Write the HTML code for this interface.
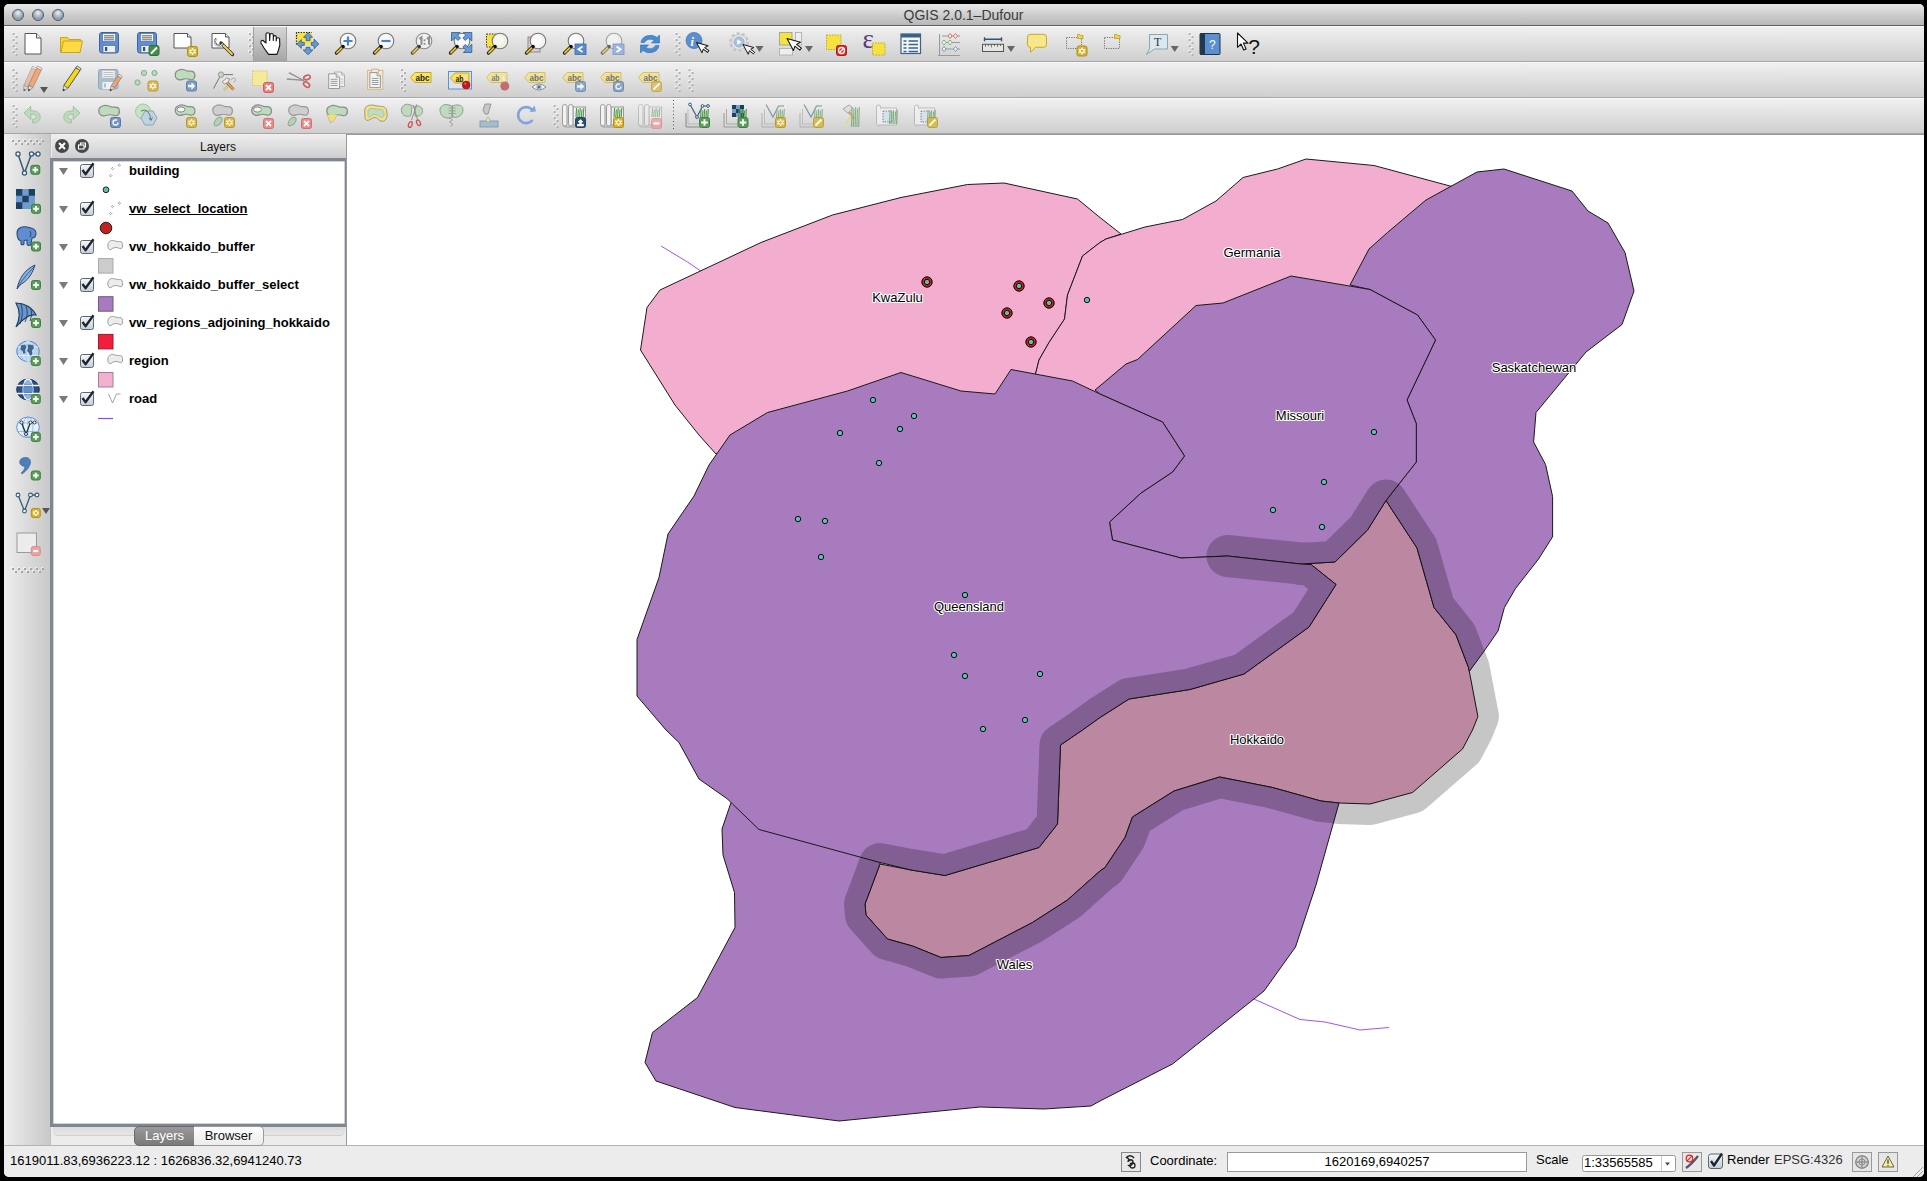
<!DOCTYPE html><html><head><meta charset="utf-8"><title>QGIS</title><style>
html,body{margin:0;padding:0;width:1927px;height:1181px;overflow:hidden;background:#000;font-family:"Liberation Sans",sans-serif}
.a{position:absolute}
.win{left:4px;top:4px;width:1920px;height:1173px;background:#ececec;border-radius:5px;overflow:hidden}
.title{left:4px;top:4px;width:1920px;height:21px;background:linear-gradient(#e9e9e9,#c9c9c9 60%,#b8b8b8);border-bottom:1px solid #5e5e5e;border-radius:5px 5px 0 0}
.ttxt{left:0;top:7px;width:1927px;text-align:center;font-size:14px;color:#3a3a3a;line-height:16px}
.tb{left:4px;width:1920px;height:36px;background:linear-gradient(#f0f0f0 0,#e6e6e6 30%,#cfcfcf 100%);border-top:1px solid #fafafa;border-bottom:1px solid #a5a5a5;box-sizing:border-box}
.ltb{left:4px;top:134px;width:48px;height:1011px;background:linear-gradient(90deg,#f2f2f2 0,#ededed 4%,#d6d6d6 60%,#c9c9c9 96%,#a9a9a9 100%)}
.dock{left:51px;top:134px;width:297px;height:1011px;background:#ececec}
.dtitle{left:52px;top:134px;width:294px;height:25px;background:linear-gradient(#efefef,#cdcdcd)}
.dtitle span{position:absolute;left:38px;width:256px;top:6px;text-align:center;font-size:12px;color:#111}
.tree{left:50px;top:158px;width:292px;height:963px;background:#fff;border:3px solid #7f8892;box-shadow:inset 0 0 0 0.5px #a0a8b0}
.canvas{left:346px;top:134px;width:1578px;height:1011px;background:#fff;border-top:1px solid #9a9a9a;border-left:1px solid #9a9a9a;box-sizing:border-box}
.sb{left:4px;top:1145px;width:1920px;height:32px;background:#ececec;border-top:1px solid #b4b4b4;box-sizing:border-box;border-radius:0 0 5px 5px}
.lbl{font-family:"Liberation Sans",sans-serif;font-size:13px;fill:#000}
.halo{stroke:#fff;stroke-width:2.2px;stroke-linejoin:round;fill:#fff}
.lt{font-size:13px;font-weight:bold;color:#000;left:129px;line-height:16px}
.st{font-size:13px;color:#000;line-height:16px}

.lname{position:absolute;left:129px;font-size:13px;font-weight:bold;color:#000;line-height:15px;white-space:nowrap}
.tabs{left:134px;top:1125px;height:20px}
.tab{position:absolute;top:0;height:20px;font-size:13px;line-height:17px;text-align:center;box-sizing:border-box}
.wbtn{position:absolute;top:9px;width:12px;height:12px;border-radius:50%;box-sizing:border-box;border:1px solid #4d5a66;background:radial-gradient(circle at 50% 30%,#f0f4f8 0,#b6c2cc 35%,#8a9aa8 70%,#c8d4dc 100%)}
</style></head><body>
<div class="a win"></div>
<div class="a title"></div><div class="a ttxt">QGIS 2.0.1–Dufour</div>
<div class="a tb" style="top:26px"></div>
<div class="a tb" style="top:62px"></div>
<div class="a tb" style="top:98px"></div>
<div class="a ltb"></div>
<div class="a dock"></div><div class="a dtitle"><span>Layers</span></div>
<div class="a tree"></div>
<div class="a canvas"></div>
<div class="a sb"></div>
<svg class="map" width="1927" height="1181" viewBox="0 0 1927 1181" style="position:absolute;left:0;top:0">
<defs><clipPath id="mc"><rect x="348" y="135" width="1576" height="1010"/></clipPath></defs>
<g clip-path="url(#mc)">
<polyline points="661,246 687.5,262 700,270.5 720,290" fill="none" stroke="#a352f0" stroke-width="1"/>
<polyline points="1240,990 1255,999.5 1300,1019.5 1325,1022 1360,1030 1389,1027.5" fill="none" stroke="#a352f0" stroke-width="1"/>
<polygon points="660,290 761,242.5 832.5,215 901,197.5 967.5,184.5 1004,183 1077.5,199 1100,217.5 1121,234 1106,239 1100,242.5 1082.5,256 1067.5,295 1064.5,319 1049,342.5 1039,360 1035.5,374 1035,400 800,420 716,454 699,435 675,405 640.5,350 647,307.5" fill="#f3aecf" stroke="#1a1a1a" stroke-width="1" stroke-linejoin="round"/>
<polygon points="1100,242.5 1106,239 1145,227 1182.5,219.5 1216,201 1243,177.5 1277.5,169 1306,159 1374,165.5 1450,186 1470,190 1365,300 1290,300 1200,320 1110,395 1060,395 1035.5,374 1039,360 1049,342.5 1064.5,319 1067.5,295 1082.5,256" fill="#f3aecf" stroke="#1a1a1a" stroke-width="1" stroke-linejoin="round"/>
<polygon points="1386,500.5 1417,548 1434,607.5 1456,635 1468.5,667.5 1469.3,671.4 1477.9,716.5 1472.5,730 1462.5,749 1412.5,792.5 1370,804 1339,803 1321,801 1272.5,787.5 1219.5,777 1174,791 1132.5,817 1125,837.5 1105,867.5 1100,871 1067.5,900 1032.5,922.5 969,955.5 941,957.5 912.5,946 887.5,939 866,915 865,904 880,864 911,870 945,875.5 1039,847.5 1057.5,824 1060.5,745 1082.5,730 1100,717.5 1129,699 1190,689.5 1244,674 1309,627 1336,584.5 1311,564.5 1301,564 1335,562 1367.5,530" fill="#f3aecf" stroke="#1a1a1a" stroke-width="1" stroke-linejoin="round"/>
<polygon points="1350,285 1369,249 1387.5,232.5 1426,200 1477,172 1504,169 1572,191 1588,211 1608,223 1625,252.5 1634,291 1622,324.5 1586,352 1536,412.5 1533.6,442 1545.6,464.6 1552.6,496.6 1552.6,536.8 1538.6,558.9 1515.3,588.8 1504.4,607.5 1498.1,630.9 1484.1,651.1 1469.3,671.4 1468.5,667.5 1456,634.8 1434,607.5 1417,548 1386,500.5 1416.3,462 1416.3,423.7 1407,400 1435.5,340 1417.5,315 1370,289.5" fill="#a77bbd" stroke="#1a1a1a" stroke-width="1" stroke-linejoin="round"/>
<polygon points="1196,305.5 1223,303 1291,276 1370,289.5 1417.5,315 1435.5,340 1407,400 1416.3,423.7 1416.3,462 1386,500.5 1367.5,530 1335,562 1301,564 1227.5,556 1181,558 1112.5,540 1109.5,522 1141,493 1172.5,472 1184.5,456 1171,435 1162.5,422 1100,394 1095,390 1126,364 1137.5,359.5" fill="#a77bbd" stroke="#1a1a1a" stroke-width="1" stroke-linejoin="round"/>
<polygon points="731,802.5 722,829 723,855 734.5,892.5 735,927.5 697.5,997.5 652.5,1032.5 645,1062.5 656,1081 735,1107.5 839,1121 980,1107 1044,1109 1091,1106 1100,1101 1172.5,1064 1264,991 1295.5,947 1316,885 1339,803 1321,801 1272.5,787.5 1219.5,777 1174,791 1132.5,817 1125,837.5 1105,867.5 1100,871 1067.5,900 1032.5,922.5 969,955.5 941,957.5 912.5,946 887.5,939 866,915 865,904 880,864 880,850 759,815 735,800" fill="#a77bbd" stroke="#1a1a1a" stroke-width="1" stroke-linejoin="round"/>
<polygon points="730,435 767.5,412.5 847.5,391 901,372.5 961,391 995,394 1011,369.5 1072.5,381 1100,394 1162.5,422 1171,435 1184.5,456 1172.5,472 1141,493 1109.5,522 1112.5,540 1181,558 1227.5,556 1301,564 1311,564.5 1336,584.5 1309,627 1244,674 1190,689.5 1129,699 1100,717.5 1082.5,730 1060.5,745 1057.5,824 1039,847.5 945,875.5 911,870 880,862.5 759,829.5 732.5,804 727.5,799 699,779 679,742.5 666,730 637,696 637,639.5 659,577.5 668,534 694,496 709,465" fill="#a77bbd" stroke="#1a1a1a" stroke-width="1" stroke-linejoin="round"/>
<g opacity="0.22">
<polygon points="1386,500.5 1417,548 1434,607.5 1456,635 1468.5,667.5 1469.3,671.4 1477.9,716.5 1472.5,730 1462.5,749 1412.5,792.5 1370,804 1339,803 1321,801 1272.5,787.5 1219.5,777 1174,791 1132.5,817 1125,837.5 1105,867.5 1100,871 1067.5,900 1032.5,922.5 969,955.5 941,957.5 912.5,946 887.5,939 866,915 865,904 880,864 911,870 945,875.5 1039,847.5 1057.5,824 1060.5,745 1082.5,730 1100,717.5 1129,699 1190,689.5 1244,674 1309,627 1336,584.5 1311,564.5 1301,564 1335,562 1367.5,530" fill="#000" stroke="#000" stroke-width="42" stroke-linejoin="round"/>
<polyline points="1227.5,556 1311,564.5" fill="none" stroke="#000" stroke-width="42" stroke-linecap="round"/>
</g>
<circle cx="927" cy="282" r="5.2" fill="#c3201f" stroke="#000" stroke-width="1"/>
<circle cx="1019" cy="286" r="5.2" fill="#c3201f" stroke="#000" stroke-width="1"/>
<circle cx="1049" cy="303" r="5.2" fill="#c3201f" stroke="#000" stroke-width="1"/>
<circle cx="1007" cy="313" r="5.2" fill="#c3201f" stroke="#000" stroke-width="1"/>
<circle cx="1031" cy="342" r="5.2" fill="#c3201f" stroke="#000" stroke-width="1"/>
<circle cx="1087" cy="300" r="2.7" fill="#5ebfae" stroke="#000" stroke-width="0.9"/>
<circle cx="873" cy="400" r="2.7" fill="#5ebfae" stroke="#000" stroke-width="0.9"/>
<circle cx="914" cy="416" r="2.7" fill="#5ebfae" stroke="#000" stroke-width="0.9"/>
<circle cx="900" cy="429" r="2.7" fill="#5ebfae" stroke="#000" stroke-width="0.9"/>
<circle cx="840" cy="433" r="2.7" fill="#5ebfae" stroke="#000" stroke-width="0.9"/>
<circle cx="879" cy="463" r="2.7" fill="#5ebfae" stroke="#000" stroke-width="0.9"/>
<circle cx="798" cy="519" r="2.7" fill="#5ebfae" stroke="#000" stroke-width="0.9"/>
<circle cx="825" cy="521" r="2.7" fill="#5ebfae" stroke="#000" stroke-width="0.9"/>
<circle cx="821" cy="557" r="2.7" fill="#5ebfae" stroke="#000" stroke-width="0.9"/>
<circle cx="965" cy="595" r="2.7" fill="#5ebfae" stroke="#000" stroke-width="0.9"/>
<circle cx="954" cy="655" r="2.7" fill="#5ebfae" stroke="#000" stroke-width="0.9"/>
<circle cx="965" cy="676" r="2.7" fill="#5ebfae" stroke="#000" stroke-width="0.9"/>
<circle cx="1040" cy="674" r="2.7" fill="#5ebfae" stroke="#000" stroke-width="0.9"/>
<circle cx="1025" cy="720" r="2.7" fill="#5ebfae" stroke="#000" stroke-width="0.9"/>
<circle cx="983" cy="729" r="2.7" fill="#5ebfae" stroke="#000" stroke-width="0.9"/>
<circle cx="1374" cy="432" r="2.7" fill="#5ebfae" stroke="#000" stroke-width="0.9"/>
<circle cx="1324" cy="482" r="2.7" fill="#5ebfae" stroke="#000" stroke-width="0.9"/>
<circle cx="1273" cy="510" r="2.7" fill="#5ebfae" stroke="#000" stroke-width="0.9"/>
<circle cx="1322" cy="527" r="2.7" fill="#5ebfae" stroke="#000" stroke-width="0.9"/>
<circle cx="927" cy="282" r="2.7" fill="#5ebfae" stroke="#000" stroke-width="0.9"/>
<circle cx="1019" cy="286" r="2.7" fill="#5ebfae" stroke="#000" stroke-width="0.9"/>
<circle cx="1049" cy="303" r="2.7" fill="#5ebfae" stroke="#000" stroke-width="0.9"/>
<circle cx="1007" cy="313" r="2.7" fill="#5ebfae" stroke="#000" stroke-width="0.9"/>
<circle cx="1031" cy="342" r="2.7" fill="#5ebfae" stroke="#000" stroke-width="0.9"/>
<text x="897.5" y="301.5" text-anchor="middle" class="lbl halo">KwaZulu</text>
<text x="897.5" y="301.5" text-anchor="middle" class="lbl">KwaZulu</text>
<text x="1252" y="256.5" text-anchor="middle" class="lbl halo">Germania</text>
<text x="1252" y="256.5" text-anchor="middle" class="lbl">Germania</text>
<text x="1534" y="371.5" text-anchor="middle" class="lbl halo">Saskatchewan</text>
<text x="1534" y="371.5" text-anchor="middle" class="lbl">Saskatchewan</text>
<text x="1300" y="420.0" text-anchor="middle" class="lbl halo">Missouri</text>
<text x="1300" y="420.0" text-anchor="middle" class="lbl">Missouri</text>
<text x="969" y="610.5" text-anchor="middle" class="lbl halo">Queensland</text>
<text x="969" y="610.5" text-anchor="middle" class="lbl">Queensland</text>
<text x="1257" y="744.0" text-anchor="middle" class="lbl halo">Hokkaido</text>
<text x="1257" y="744.0" text-anchor="middle" class="lbl">Hokkaido</text>
<text x="1014.5" y="968.5" text-anchor="middle" class="lbl halo">Wales</text>
<text x="1014.5" y="968.5" text-anchor="middle" class="lbl">Wales</text>
</g>
</svg>
<svg width="1927" height="1181" viewBox="0 0 1927 1181" style="position:absolute;left:0;top:0;pointer-events:none"><defs><linearGradient id="pressed" x1="0" y1="0" x2="0" y2="1"><stop offset="0" stop-color="#d6d6d6"/><stop offset="1" stop-color="#a6a6a6"/></linearGradient><linearGradient id="cb" x1="0" y1="0" x2="0" y2="1"><stop offset="0" stop-color="#f6f8fa"/><stop offset="1" stop-color="#c4ccd6"/></linearGradient></defs><rect x="11.7" y="32.2" width="2" height="2" fill="#fcfcfc" opacity="0.9"/><rect x="12.5" y="33" width="2" height="2" fill="#b0b0b0"/><rect x="14.7" y="35.2" width="2" height="2" fill="#fcfcfc" opacity="0.9"/><rect x="15.5" y="36" width="2" height="2" fill="#b0b0b0"/><rect x="11.7" y="38.2" width="2" height="2" fill="#fcfcfc" opacity="0.9"/><rect x="12.5" y="39" width="2" height="2" fill="#b0b0b0"/><rect x="14.7" y="41.2" width="2" height="2" fill="#fcfcfc" opacity="0.9"/><rect x="15.5" y="42" width="2" height="2" fill="#b0b0b0"/><rect x="11.7" y="44.2" width="2" height="2" fill="#fcfcfc" opacity="0.9"/><rect x="12.5" y="45" width="2" height="2" fill="#b0b0b0"/><rect x="14.7" y="47.2" width="2" height="2" fill="#fcfcfc" opacity="0.9"/><rect x="15.5" y="48" width="2" height="2" fill="#b0b0b0"/><rect x="11.7" y="50.2" width="2" height="2" fill="#fcfcfc" opacity="0.9"/><rect x="12.5" y="51" width="2" height="2" fill="#b0b0b0"/><rect x="14.7" y="53.2" width="2" height="2" fill="#fcfcfc" opacity="0.9"/><rect x="15.5" y="54" width="2" height="2" fill="#b0b0b0"/><path d="M25.0 33.5H36.5L41.0 38V54.0H25.0Z" fill="#fff" stroke="#555" stroke-width="1"/><path d="M36.5 33.5V38H41.0" fill="#eee" stroke="#555" stroke-width="1"/><path d="M60.5 37.5h7l1.5 2h11.5v12.5h-20z" fill="#f6d33a" stroke="#c9a51c" stroke-width="1"/><path d="M61 52.5l2.5-11.5h19l-2.5 11.5z" fill="#fedb45" stroke="#c9a51c" stroke-width="1"/><rect x="99.5" y="32.5" width="19" height="20.5" rx="2.5" fill="#5e8fd2" stroke="#3d6399" stroke-width="1"/><rect x="102.5" y="33.5" width="13" height="8" fill="#f4f4f4" stroke="#3d6399" stroke-width="0.6"/><path d="M104 35.8h10M104 37.8h10M104 39.8h10" stroke="#555" stroke-width="0.9"/><rect x="103" y="45.5" width="12.5" height="7" fill="#ededed" stroke="#3d6399" stroke-width="0.6"/><rect x="105" y="47" width="2.2" height="4" fill="#2a4f80"/><rect x="137.5" y="32.5" width="19" height="20.5" rx="2.5" fill="#5e8fd2" stroke="#3d6399" stroke-width="1"/><rect x="140.5" y="33.5" width="13" height="8" fill="#f4f4f4" stroke="#3d6399" stroke-width="0.6"/><path d="M142 35.8h10M142 37.8h10M142 39.8h10" stroke="#555" stroke-width="0.9"/><rect x="141" y="45.5" width="12.5" height="7" fill="#ededed" stroke="#3d6399" stroke-width="0.6"/><rect x="143" y="47" width="2.2" height="4" fill="#2a4f80"/><rect x="149.0" y="45.5" width="10" height="10" rx="2" fill="#3f8f48" stroke="#2f6f38" stroke-width="1"/><path d="M151.0 53.5L157.0 47.5" stroke="#fff" stroke-width="2"/><path d="M174.0 33.5H187.5L191.0 37V48.0H174.0Z" fill="#fff" stroke="#555" stroke-width="1"/><path d="M187.5 33.5V37H191.0" fill="#eee" stroke="#555" stroke-width="1"/><rect x="187.5" y="46.5" width="10" height="10" rx="2" fill="#d8b22a" stroke="#b28f12" stroke-width="1"/><path d="M192.5 48V55M189.2 49.8L195.8 53.2M189.2 53.2L195.8 49.8" stroke="#fff" stroke-width="1.3"/><circle cx="192.5" cy="51.5" r="1.8" fill="#d8b22a" stroke="#fff" stroke-width="1"/><path d="M212.0 33.5H225.5L229.0 37V48.0H212.0Z" fill="#fff" stroke="#555" stroke-width="1"/><path d="M225.5 33.5V37H229.0" fill="#eee" stroke="#555" stroke-width="1"/><path d="M221 43L232.5 54.5" stroke="#333" stroke-width="3.4" stroke-linecap="round"/><path d="M223.5 45.5L232 54" stroke="#f2cf50" stroke-width="2" stroke-linecap="round"/><path d="M216.5 38.5a4 4 0 1 0 6 5" fill="none" stroke="#555" stroke-width="2.2"/><path d="M217 38.6a4 4 0 1 0 5.6 4.8" fill="none" stroke="#fff" stroke-width="1"/><rect x="248.2" y="32.2" width="2" height="2" fill="#fcfcfc" opacity="0.9"/><rect x="249" y="33" width="2" height="2" fill="#b0b0b0"/><rect x="251.2" y="35.2" width="2" height="2" fill="#fcfcfc" opacity="0.9"/><rect x="252" y="36" width="2" height="2" fill="#b0b0b0"/><rect x="248.2" y="38.2" width="2" height="2" fill="#fcfcfc" opacity="0.9"/><rect x="249" y="39" width="2" height="2" fill="#b0b0b0"/><rect x="251.2" y="41.2" width="2" height="2" fill="#fcfcfc" opacity="0.9"/><rect x="252" y="42" width="2" height="2" fill="#b0b0b0"/><rect x="248.2" y="44.2" width="2" height="2" fill="#fcfcfc" opacity="0.9"/><rect x="249" y="45" width="2" height="2" fill="#b0b0b0"/><rect x="251.2" y="47.2" width="2" height="2" fill="#fcfcfc" opacity="0.9"/><rect x="252" y="48" width="2" height="2" fill="#b0b0b0"/><rect x="248.2" y="50.2" width="2" height="2" fill="#fcfcfc" opacity="0.9"/><rect x="249" y="51" width="2" height="2" fill="#b0b0b0"/><rect x="251.2" y="53.2" width="2" height="2" fill="#fcfcfc" opacity="0.9"/><rect x="252" y="54" width="2" height="2" fill="#b0b0b0"/><rect x="253.5" y="27" width="33" height="34" fill="url(#pressed)"/><path d="M253.5 27V61M286.5 27V61" stroke="#a0a0a0" stroke-width="1"/><path d="M268.5 54.4L264 48L261 43C260.5 41.5 261.5 40 263 40.5L266 43L266 34C266 32.3 269.5 32.3 269.5 34L269.7 40.5L270 35C270 33 273.3 33 273.3 35L273.3 40.5L273.4 37C273.4 35.2 276.2 35.2 276.2 37L276.2 41L276.4 39C276.4 37.3 279.6 37.3 279.6 39L279.8 45L278.5 50L277 54.4Z" fill="#fff" stroke="#111" stroke-width="1.1" stroke-linejoin="round"/><rect x="296.5" y="32.5" width="15.5" height="12" fill="#f8e43a"/><path d="M296.5 44.5V32.5H312" fill="none" stroke="#111" stroke-width="1.2" stroke-dasharray="1.3 1.4"/><path d="M308 32.7L312.6 37.3L310 37.3L310 40.6L306.1 40.6L306.1 37.3L303.5 37.3Z M296.8 44L301.3 39.5L301.3 42.4L304.3 42.4L304.3 45.4L301.3 45.4L301.3 48.4Z M318.9 44L314 39.1L314 42.4L311.4 42.4L311.4 45.4L314 45.4L314 48.8Z M308 54.8L312.9 49.9L310 49.9L310 47.3L306.1 47.3L306.1 49.9L303.2 49.9Z" fill="#6a9ad6" stroke="#2f5a8e" stroke-width="0.8" stroke-linejoin="round"/><circle cx="348" cy="41" r="7.8" fill="#f4f4f4" stroke="#777" stroke-width="1.1"/><circle cx="347" cy="40" r="5" fill="#fff" opacity="0.5"/><path d="M348 36.5V45.5M343.5 41H352.5" stroke="#4a84c4" stroke-width="2.2"/><path d="M343 46.5L336.5 53" stroke="#222" stroke-width="3.4" stroke-linecap="round"/><path d="M342.2 47.4L337 52.6" stroke="#f2c418" stroke-width="2" stroke-linecap="round"/><circle cx="343" cy="46.6" r="1.6" fill="#111"/><circle cx="386" cy="41" r="7.8" fill="#f4f4f4" stroke="#777" stroke-width="1.1"/><circle cx="385" cy="40" r="5" fill="#fff" opacity="0.5"/><path d="M381.5 41H390.5" stroke="#4a84c4" stroke-width="2.2"/><path d="M381 46.5L374.5 53" stroke="#222" stroke-width="3.4" stroke-linecap="round"/><path d="M380.2 47.4L375 52.6" stroke="#f2c418" stroke-width="2" stroke-linecap="round"/><circle cx="381" cy="46.6" r="1.6" fill="#111"/><g opacity="0.8"><circle cx="424" cy="41" r="7.8" fill="#f4f4f4" stroke="#777" stroke-width="1.1"/><circle cx="423" cy="40" r="5" fill="#fff" opacity="0.5"/><path d="M419.3 39l2.2-1.6v7.4M426.8 39l2.2-1.6v7.4" fill="none" stroke="#7a7a7a" stroke-width="2.1"/><rect x="423.6" y="39.3" width="1.9" height="1.9" fill="#7a7a7a"/><rect x="423.6" y="42.9" width="1.9" height="1.9" fill="#7a7a7a"/><path d="M419 46.5L412.5 53" stroke="#222" stroke-width="3.4" stroke-linecap="round"/><path d="M418.2 47.4L413 52.6" stroke="#f2c418" stroke-width="2" stroke-linecap="round"/><circle cx="419" cy="46.6" r="1.6" fill="#111"/></g><circle cx="462" cy="41" r="7.8" fill="#f4f4f4" stroke="#777" stroke-width="1.1"/><circle cx="461" cy="40" r="5" fill="#fff" opacity="0.5"/><path d="M457 46.5L450.5 53" stroke="#222" stroke-width="3.4" stroke-linecap="round"/><path d="M456.2 47.4L451 52.6" stroke="#f2c418" stroke-width="2" stroke-linecap="round"/><circle cx="457" cy="46.6" r="1.6" fill="#111"/><path d="M451.5 32.5H460L457.5 35L460.5 38L458 40.5L455 37.5L451.5 41Z M471.8 32.5H463.3L465.8 35L462.8 38L465.3 40.5L468.3 37.5L471.8 41Z M471.8 52.5H463.3L465.8 50L462.8 47L465.3 44.5L468.3 47.5L471.8 44Z" fill="#6a9ad6" stroke="#2f5a8e" stroke-width="0.8" stroke-linejoin="round"/><rect x="486.5" y="34" width="9" height="13" fill="#f6e23c" stroke="#222" stroke-width="0.9" stroke-dasharray="1.5 1.2"/><circle cx="500" cy="41" r="7.8" fill="#efefe0" stroke="#777" stroke-width="1.1"/><circle cx="499" cy="40" r="5" fill="#fff" opacity="0.5"/><path d="M495 46.5L488.5 53" stroke="#222" stroke-width="3.4" stroke-linecap="round"/><path d="M494.2 47.4L489 52.6" stroke="#f2c418" stroke-width="2" stroke-linecap="round"/><circle cx="495" cy="46.6" r="1.6" fill="#111"/><rect x="528" y="37" width="12" height="15" fill="#dccbd8" stroke="#777" stroke-width="0.8"/><circle cx="538" cy="41" r="7.8" fill="#f4f4f4" stroke="#777" stroke-width="1.1"/><circle cx="537" cy="40" r="5" fill="#fff" opacity="0.5"/><path d="M533 46.5L526.5 53" stroke="#222" stroke-width="3.4" stroke-linecap="round"/><path d="M532.2 47.4L527 52.6" stroke="#f2c418" stroke-width="2" stroke-linecap="round"/><circle cx="533" cy="46.6" r="1.6" fill="#111"/><circle cx="576" cy="41" r="7.8" fill="#f4f4f4" stroke="#777" stroke-width="1.1"/><circle cx="575" cy="40" r="5" fill="#fff" opacity="0.5"/><path d="M571 46.5L564.5 53" stroke="#222" stroke-width="3.4" stroke-linecap="round"/><path d="M570.2 47.4L565 52.6" stroke="#f2c418" stroke-width="2" stroke-linecap="round"/><circle cx="571" cy="46.6" r="1.6" fill="#111"/><rect x="575" y="44" width="11" height="10.5" fill="#5a8ccc" stroke="#3a6aa8" stroke-width="0.8"/><path d="M582.5 46.5l-4 2.7 4 2.7" stroke="#fff" stroke-width="1.8" fill="none"/><g opacity="0.6"><circle cx="614" cy="41" r="7.8" fill="#f4f4f4" stroke="#777" stroke-width="1.1"/><circle cx="613" cy="40" r="5" fill="#fff" opacity="0.5"/><path d="M609 46.5L602.5 53" stroke="#222" stroke-width="3.4" stroke-linecap="round"/><path d="M608.2 47.4L603 52.6" stroke="#f2c418" stroke-width="2" stroke-linecap="round"/><circle cx="609" cy="46.6" r="1.6" fill="#111"/></g><rect x="613" y="44" width="11" height="10.5" fill="#9ab6da" stroke="#7a96c0" stroke-width="0.8"/><path d="M616.5 46.5l4 2.7-4 2.7" stroke="#fff" stroke-width="1.8" fill="none"/><path d="M641 42.5a9.5 8 0 0 1 16-5l2.5-2.5v8h-8l2.6-2.6a6 5 0 0 0-9.6 2.1z" fill="#4a8ad2" stroke="#2e6cb0" stroke-width="0.6"/><path d="M659 45.5a9.5 8 0 0 1-16 5l-2.5 2.5v-8h8l-2.6 2.6a6 5 0 0 0 9.6-2.1z" fill="#4a8ad2" stroke="#2e6cb0" stroke-width="0.6"/><rect x="674.7" y="32.2" width="2" height="2" fill="#fcfcfc" opacity="0.9"/><rect x="675.5" y="33" width="2" height="2" fill="#b0b0b0"/><rect x="677.7" y="35.2" width="2" height="2" fill="#fcfcfc" opacity="0.9"/><rect x="678.5" y="36" width="2" height="2" fill="#b0b0b0"/><rect x="674.7" y="38.2" width="2" height="2" fill="#fcfcfc" opacity="0.9"/><rect x="675.5" y="39" width="2" height="2" fill="#b0b0b0"/><rect x="677.7" y="41.2" width="2" height="2" fill="#fcfcfc" opacity="0.9"/><rect x="678.5" y="42" width="2" height="2" fill="#b0b0b0"/><rect x="674.7" y="44.2" width="2" height="2" fill="#fcfcfc" opacity="0.9"/><rect x="675.5" y="45" width="2" height="2" fill="#b0b0b0"/><rect x="677.7" y="47.2" width="2" height="2" fill="#fcfcfc" opacity="0.9"/><rect x="678.5" y="48" width="2" height="2" fill="#b0b0b0"/><rect x="674.7" y="50.2" width="2" height="2" fill="#fcfcfc" opacity="0.9"/><rect x="675.5" y="51" width="2" height="2" fill="#b0b0b0"/><rect x="677.7" y="53.2" width="2" height="2" fill="#fcfcfc" opacity="0.9"/><rect x="678.5" y="54" width="2" height="2" fill="#b0b0b0"/><circle cx="694" cy="40.5" r="8" fill="#5b8fd0" stroke="#4677b8" stroke-width="0.8"/><text x="690.5" y="45.5" font-family="Liberation Serif" font-style="italic" font-weight="bold" font-size="12" fill="#fff">i</text><path transform="translate(696.5,42.5) rotate(-28) scale(0.9)" d="M0 0L0 13L3.2 10L5.6 15.5L7.8 14.5L5.4 9.2L9.6 9.2Z" fill="#fff" stroke="#111" stroke-width="1" stroke-linejoin="round"/><circle cx="739" cy="42" r="8.6" fill="#e4e4e4" stroke="#c4c4c4" stroke-width="2.4" stroke-dasharray="3 2.4"/><circle cx="739" cy="42" r="7.4" fill="#ececec" stroke="#c8c8c8" stroke-width="1"/><circle cx="739" cy="42" r="5.2" fill="#a8c0e0" stroke="#8fa8c8" stroke-width="0.6"/><path d="M737.2 39.2v5.6l4.6-2.8z" fill="#fff"/><path transform="translate(743,44.5) rotate(-28) scale(0.85)" d="M0 0L0 13L3.2 10L5.6 15.5L7.8 14.5L5.4 9.2L9.6 9.2Z" fill="#f4f4f4" stroke="#111" stroke-width="1" stroke-linejoin="round"/><path d="M755.5 46 h8 l-4 6 z" fill="#666"/><rect x="779.5" y="32.5" width="12.5" height="12.5" fill="#f6e23c" stroke="#999" stroke-width="0.8"/><rect x="795.5" y="32.5" width="6" height="12.5" fill="#eee" stroke="#aaa" stroke-width="0.8"/><rect x="779.5" y="48.5" width="13" height="6.5" fill="#eee" stroke="#aaa" stroke-width="0.8"/><path transform="translate(787,38.5) rotate(-28) scale(1.05)" d="M0 0L0 13L3.2 10L5.6 15.5L7.8 14.5L5.4 9.2L9.6 9.2Z" fill="#fff" stroke="#111" stroke-width="1" stroke-linejoin="round"/><path d="M805 46 h8 l-4 6 z" fill="#666"/><rect x="826.5" y="35" width="14.5" height="14.5" fill="#f6e23c" stroke="#b8a020" stroke-width="0.9" stroke-dasharray="1.5 1.2"/><rect x="836.5" y="45.5" width="10" height="10" rx="2" fill="#e02828" stroke="#b01818" stroke-width="1"/><circle cx="841.5" cy="50.5" r="3" fill="none" stroke="#fff" stroke-width="1.3"/><path d="M839.5 52.5L843.5 48.5" stroke="#fff" stroke-width="1.3"/><text x="862.5" y="47.8" font-family="Liberation Serif" font-size="27" fill="#5a3a80">ε</text><rect x="872.5" y="43" width="12.5" height="12" fill="#f6e23c" stroke="#b8a020" stroke-width="0.9" stroke-dasharray="1.5 1.2"/><rect x="901" y="34" width="19.5" height="19.5" fill="#f4f8fc" stroke="#3b6288" stroke-width="1.2"/><rect x="901" y="34" width="19.5" height="3.5" fill="#3b6288"/><path d="M903.5 41h3M908.5 41h9.5M903.5 44.5h3M908.5 44.5h9.5M903.5 48h3M908.5 48h9.5M903.5 51.5h3M908.5 51.5h9.5" stroke="#3b6288" stroke-width="1.3"/><path d="M938 55.5h22M939.5 55V34M942 36h18M942 42.5h18M942 49h18" stroke="#999" stroke-width="1"/><path d="M950 33.5l2 2.5-2 2.5-2-2.5z M955.5 33.5l2 2.5-2 2.5-2-2.5z" fill="#fff" stroke="#d66" stroke-width="1"/><path d="M944 40l2 2.5-2 2.5-2-2.5z M950 40l2 2.5-2 2.5-2-2.5z" fill="#fff" stroke="#6b6" stroke-width="1"/><path d="M944 46.5l2 2.5-2 2.5-2-2.5z M955.5 46.5l2 2.5-2 2.5-2-2.5z" fill="#fff" stroke="#69c" stroke-width="1"/><path d="M984.5 39.2h17M984.5 37.2v4M1001.5 37.2v4" stroke="#2f5478" stroke-width="1.4"/><rect x="982.5" y="44.3" width="21" height="7.2" fill="#e6e6e0" stroke="#555" stroke-width="1"/><path d="M985.5 44.3v2.5M988.5 44.3v1.8M991.5 44.3v3M994.5 44.3v1.8M997.5 44.3v2.5M1000.5 44.3v1.8" stroke="#555" stroke-width="0.8"/><path d="M1007 46 h8 l-4 6 z" fill="#666"/><path transform="translate(0,1.8)" d="M1027.5 35.5a3 3 0 0 1 3-3h13a3 3 0 0 1 3 3v7a3 3 0 0 1-3 3h-8l-5 5v-5h0a3 3 0 0 1-3-3z" fill="#f8e78a" stroke="#c9a820" stroke-width="1"/><rect x="1066.5" y="37.5" width="15" height="11" fill="none" stroke="#666" stroke-width="0.9" stroke-dasharray="1.2 1.2"/><path d="M1077.5 37.5v-3h2.5l1 1h2v3h-5.5z" fill="#f6d33a" stroke="#b8951a" stroke-width="0.7"/><rect x="1077.0" y="46.0" width="10" height="10" rx="2" fill="#d8b22a" stroke="#b28f12" stroke-width="1"/><path d="M1082.0 47.5V54.5M1078.7 49.3L1085.3 52.7M1078.7 52.7L1085.3 49.3" stroke="#fff" stroke-width="1.3"/><circle cx="1082.0" cy="51.0" r="1.8" fill="#d8b22a" stroke="#fff" stroke-width="1"/><rect x="1104.5" y="37.5" width="15" height="11" fill="none" stroke="#666" stroke-width="0.9" stroke-dasharray="1.2 1.2"/><path d="M1114.5 37.5v-3h2.5l1 1h2v3h-5.5z" fill="#f6d33a" stroke="#b8951a" stroke-width="0.7"/><path d="M1149.5 34.5h18v14.5h-13l-8 5.5 3-5.5v-14.5z" fill="#dce8f0" stroke="#8aa" stroke-width="1"/><text x="1154" y="46" font-family="Liberation Serif" font-size="12" fill="#333">T</text><path d="M1170.7 46 h8 l-4 6 z" fill="#666"/><rect x="1187.7" y="32.2" width="2" height="2" fill="#fcfcfc" opacity="0.9"/><rect x="1188.5" y="33" width="2" height="2" fill="#b0b0b0"/><rect x="1190.7" y="35.2" width="2" height="2" fill="#fcfcfc" opacity="0.9"/><rect x="1191.5" y="36" width="2" height="2" fill="#b0b0b0"/><rect x="1187.7" y="38.2" width="2" height="2" fill="#fcfcfc" opacity="0.9"/><rect x="1188.5" y="39" width="2" height="2" fill="#b0b0b0"/><rect x="1190.7" y="41.2" width="2" height="2" fill="#fcfcfc" opacity="0.9"/><rect x="1191.5" y="42" width="2" height="2" fill="#b0b0b0"/><rect x="1187.7" y="44.2" width="2" height="2" fill="#fcfcfc" opacity="0.9"/><rect x="1188.5" y="45" width="2" height="2" fill="#b0b0b0"/><rect x="1190.7" y="47.2" width="2" height="2" fill="#fcfcfc" opacity="0.9"/><rect x="1191.5" y="48" width="2" height="2" fill="#b0b0b0"/><rect x="1187.7" y="50.2" width="2" height="2" fill="#fcfcfc" opacity="0.9"/><rect x="1188.5" y="51" width="2" height="2" fill="#b0b0b0"/><rect x="1190.7" y="53.2" width="2" height="2" fill="#fcfcfc" opacity="0.9"/><rect x="1191.5" y="54" width="2" height="2" fill="#b0b0b0"/><rect x="1200" y="33.5" width="20" height="21" rx="1" fill="#5b8fd0" stroke="#1f3346" stroke-width="1"/><rect x="1200" y="33.5" width="5" height="21" fill="#22384c"/><text x="1209" y="48.5" font-family="Liberation Sans" font-size="12" fill="#fff">?</text><path transform="translate(1237.5,33) rotate(0) scale(1.1)" d="M0 0L0 13L3.2 10L5.6 15.5L7.8 14.5L5.4 9.2L9.6 9.2Z" fill="#fff" stroke="#111" stroke-width="1" stroke-linejoin="round"/><text x="1248.3" y="54" font-family="Liberation Sans" font-size="21" fill="#111">?</text><rect x="11.7" y="68.2" width="2" height="2" fill="#fcfcfc" opacity="0.9"/><rect x="12.5" y="69" width="2" height="2" fill="#b0b0b0"/><rect x="14.7" y="71.2" width="2" height="2" fill="#fcfcfc" opacity="0.9"/><rect x="15.5" y="72" width="2" height="2" fill="#b0b0b0"/><rect x="11.7" y="74.2" width="2" height="2" fill="#fcfcfc" opacity="0.9"/><rect x="12.5" y="75" width="2" height="2" fill="#b0b0b0"/><rect x="14.7" y="77.2" width="2" height="2" fill="#fcfcfc" opacity="0.9"/><rect x="15.5" y="78" width="2" height="2" fill="#b0b0b0"/><rect x="11.7" y="80.2" width="2" height="2" fill="#fcfcfc" opacity="0.9"/><rect x="12.5" y="81" width="2" height="2" fill="#b0b0b0"/><rect x="14.7" y="83.2" width="2" height="2" fill="#fcfcfc" opacity="0.9"/><rect x="15.5" y="84" width="2" height="2" fill="#b0b0b0"/><rect x="11.7" y="86.2" width="2" height="2" fill="#fcfcfc" opacity="0.9"/><rect x="12.5" y="87" width="2" height="2" fill="#b0b0b0"/><rect x="14.7" y="89.2" width="2" height="2" fill="#fcfcfc" opacity="0.9"/><rect x="15.5" y="90" width="2" height="2" fill="#b0b0b0"/><g opacity="0.7"><path d="M28.3 87.5 L36.3 70.0 L31.7 68.0 L23.8 85.4Z" fill="#e8b090" stroke="#999" stroke-width="0.9"/><path d="M24.0 91.0 L28.3 87.5 L23.8 85.4Z" fill="#e4e4e4" stroke="#777" stroke-width="0.8"/><circle cx="24.5" cy="89.9" r="1" fill="#333"/><path d="M36.3 70.0 L37.1 68.2 L32.6 66.1 L31.7 68.0Z" fill="#f4f4f4" stroke="#999" stroke-width="0.8"/></g><g opacity="0.9"><path d="M32.9 87.6 L41.3 70.1 L36.7 67.9 L28.4 85.4Z" fill="#f0a070" stroke="#b08a70" stroke-width="0.9"/><path d="M28.5 91.0 L32.9 87.6 L28.4 85.4Z" fill="#e4e4e4" stroke="#777" stroke-width="0.8"/><circle cx="29.0" cy="89.9" r="1" fill="#333"/><path d="M41.3 70.1 L42.1 68.3 L37.6 66.1 L36.7 67.9Z" fill="#f4f4f4" stroke="#b08a70" stroke-width="0.8"/></g><path d="M40 87 h8 l-4 6 z" fill="#555"/><path d="M67.9 88.3 L80.1 70.4 L75.9 67.6 L63.8 85.5Z" fill="#f2d818" stroke="#444" stroke-width="0.9"/><path d="M63.0 91.0 L67.9 88.3 L63.8 85.5Z" fill="#e4e4e4" stroke="#777" stroke-width="0.8"/><circle cx="63.7" cy="90.0" r="1" fill="#333"/><path d="M80.1 70.4 L81.2 68.8 L77.1 65.9 L75.9 67.6Z" fill="#f4f4f4" stroke="#444" stroke-width="0.8"/><rect x="98.5" y="69.5" width="19.5" height="19.5" rx="2" fill="#a9bfd0" stroke="#90a6b8"/><rect x="102" y="70.5" width="13" height="7.5" fill="#f2f2f2" stroke="#b0b8c0" stroke-width="0.5"/><path d="M103.5 72.5h10M103.5 74.5h10M103.5 76.5h10" stroke="#aaa" stroke-width="0.7"/><rect x="102.5" y="82" width="12" height="7" fill="#f0f0f0"/><rect x="104" y="83.5" width="2" height="4" fill="#a9bfd0"/><g opacity="0.9"><path d="M114.5 88.0 L121.2 78.1 L117.8 75.9 L111.2 85.7Z" fill="#f0a070" stroke="#a08060" stroke-width="0.9"/><path d="M110.0 91.0 L114.5 88.0 L111.2 85.7Z" fill="#e4e4e4" stroke="#777" stroke-width="0.8"/><circle cx="110.7" cy="90.0" r="1" fill="#333"/><path d="M121.2 78.1 L122.3 76.5 L119.0 74.2 L117.8 75.9Z" fill="#f4f4f4" stroke="#a08060" stroke-width="0.8"/></g><circle cx="144" cy="73" r="2.6" fill="#b8dcb8" stroke="#8a8" stroke-width="1"/><circle cx="154.5" cy="73" r="2.6" fill="#b8dcb8" stroke="#8a8" stroke-width="1"/><circle cx="137.5" cy="82.5" r="2.6" fill="#b8dcb8" stroke="#8a8" stroke-width="1"/><g opacity="0.8"><rect x="148.0" y="81.0" width="10" height="10" rx="2" fill="#d8b22a" stroke="#b28f12" stroke-width="1"/><path d="M153.0 82.5V89.5M149.7 84.3L156.3 87.7M149.7 87.7L156.3 84.3" stroke="#fff" stroke-width="1.3"/><circle cx="153.0" cy="86.0" r="1.8" fill="#d8b22a" stroke="#fff" stroke-width="1"/></g><path transform="translate(174.5,69) scale(0.9545454545454546,0.9230769230769231)" d="M3 2C6 -0.5 10 0.5 13 2C16 3.2 19.5 0.8 21 4.5C22.3 8 20.5 12.5 17 11.5C14 10.5 11.5 10 8.5 11.2C3.5 13.2 0.2 9.5 0.8 5.5C1 4 1.8 2.8 3 2Z" fill="#bcdcbc" stroke="#8a8a8a" stroke-width="1.28"/><g opacity="0.85"><rect x="186.5" y="81.0" width="10" height="10" rx="2" fill="#6a92c8" stroke="#4a72a8" stroke-width="1"/><path d="M188 84.7h3.5v-2.5l3.8 3.8l-3.8 3.8v-2.5h-3.5z" fill="#fff"/></g><path d="M213.5 88.5L221 74.6M221 74.6h12" stroke="#666" stroke-width="0.9" fill="none"/><circle cx="221" cy="74.6" r="2.7" fill="#bcdcbc" stroke="#999" stroke-width="1"/><path d="M224 90l6-6" stroke="#999" stroke-width="2.4"/><path d="M224 90l6-6" stroke="#ece070" stroke-width="1.4"/><path d="M227 82.5l6.5 7" stroke="#a06a30" stroke-width="3"/><path d="M227 82.5l6.5 7" stroke="#e0a058" stroke-width="1.8"/><path d="M222.3 81.8l4.3-3.8 3.2 1.2-2.2 3.4-3.2 1.5z" fill="#ececec" stroke="#888" stroke-width="0.9"/><path d="M231.5 80.2a2 2 0 1 1 2.2 1.8" fill="none" stroke="#aaa" stroke-width="1"/><rect x="252.5" y="71" width="14.5" height="14.5" fill="#f4ea9c" stroke="#d8c050" stroke-width="0.9" stroke-dasharray="1.5 1.2"/><rect x="263.5" y="82.5" width="10" height="10" rx="2" fill="#e88080" stroke="#cc5f5f" stroke-width="1"/><path d="M266 85L271 90M266 90L271 85" stroke="#fff" stroke-width="1.8"/><path d="M303.5 80.3L288.8 73.2L289.6 72.6Z M303.5 80.3L287 79.4L287.3 78.7Z" fill="#ddd" stroke="#888" stroke-width="0.8" stroke-linejoin="round"/><ellipse cx="307" cy="77.5" rx="3.4" ry="2.2" transform="rotate(-22 307 77.5)" fill="none" stroke="#d05a5a" stroke-width="1.5"/><ellipse cx="306.6" cy="84.6" rx="3.4" ry="2.2" transform="rotate(38 306.6 84.6)" fill="none" stroke="#d05a5a" stroke-width="1.5"/><path d="M303 80.5L305 82.5M303.5 80L305.5 78.5" stroke="#888" stroke-width="1"/><path d="M334.5 72h7l3 3v11.5h-10z" fill="#efefef" stroke="#aaa" stroke-width="0.9"/><path d="M341.5 72v3h3" fill="none" stroke="#aaa" stroke-width="0.8"/><path d="M340.5 79.3h3M340.5 81.4h3M340.5 83.4h3" stroke="#bbb" stroke-width="0.7"/><path d="M328.7 73.8h7.5l3.4 3.4v11.3h-10.9z" fill="#f2f2f2" stroke="#999" stroke-width="1"/><path d="M336.2 73.8v3.4h3.4" fill="#ddd" stroke="#999" stroke-width="0.9"/><path d="M330.7 79.3h6.8M330.7 81.4h6.8M330.7 83.4h6.8M330.7 85.5h6.8" stroke="#888" stroke-width="0.8"/><rect x="367.6" y="70.4" width="15.2" height="19" fill="#f3e9d6" stroke="#d8b888" stroke-width="1"/><rect x="371.6" y="69.2" width="7" height="3.5" rx="0.8" fill="#f3e9d6" stroke="#d0ac78" stroke-width="1"/><path d="M369.8 72.6h7.3l3.3 3.3v11.7h-10.6z" fill="#f2f2f2" stroke="#999" stroke-width="1"/><path d="M377.1 72.6v3.3h3.3" fill="#ddd" stroke="#999" stroke-width="0.9"/><path d="M371.8 78.5h6.7M371.8 80.5h6.7M371.8 82.5h6.7M371.8 84.5h6.7" stroke="#888" stroke-width="0.8"/><rect x="400.2" y="68.2" width="2" height="2" fill="#fcfcfc" opacity="0.9"/><rect x="401" y="69" width="2" height="2" fill="#b0b0b0"/><rect x="403.2" y="71.2" width="2" height="2" fill="#fcfcfc" opacity="0.9"/><rect x="404" y="72" width="2" height="2" fill="#b0b0b0"/><rect x="400.2" y="74.2" width="2" height="2" fill="#fcfcfc" opacity="0.9"/><rect x="401" y="75" width="2" height="2" fill="#b0b0b0"/><rect x="403.2" y="77.2" width="2" height="2" fill="#fcfcfc" opacity="0.9"/><rect x="404" y="78" width="2" height="2" fill="#b0b0b0"/><rect x="400.2" y="80.2" width="2" height="2" fill="#fcfcfc" opacity="0.9"/><rect x="401" y="81" width="2" height="2" fill="#b0b0b0"/><rect x="403.2" y="83.2" width="2" height="2" fill="#fcfcfc" opacity="0.9"/><rect x="404" y="84" width="2" height="2" fill="#b0b0b0"/><rect x="400.2" y="86.2" width="2" height="2" fill="#fcfcfc" opacity="0.9"/><rect x="401" y="87" width="2" height="2" fill="#b0b0b0"/><rect x="403.2" y="89.2" width="2" height="2" fill="#fcfcfc" opacity="0.9"/><rect x="404" y="90" width="2" height="2" fill="#b0b0b0"/><path d="M410.5 77.5L415 72.5H431V82.5H415Z" fill="#fbe26a" stroke="#c8a818" stroke-width="1"/><text x="415.5" y="81.2" font-family="Liberation Sans" font-weight="bold" font-size="9.5" fill="#222" textLength="14" lengthAdjust="spacingAndGlyphs">abc</text><rect x="448.5" y="71.5" width="23" height="17.5" fill="#dbe3ec" stroke="#5b8fd8" stroke-width="1"/><path d="M450.5 78.0L455 73.0H469V83.0H455Z" fill="#fbe26a" stroke="#c8a818" stroke-width="1"/><text x="455.5" y="81.7" font-family="Liberation Sans" font-weight="bold" font-size="9.5" fill="#222" textLength="8" lengthAdjust="spacingAndGlyphs">ab</text><path d="M464.2 76.5l1.6 5" stroke="#fff" stroke-width="1.4"/><path d="M464.2 76.5l1.6 5" stroke="#777" stroke-width="0.3"/><circle cx="466.2" cy="85" r="3.9" fill="#c41a1a" stroke="#901010" stroke-width="0.6"/><circle cx="465.2" cy="83.8" r="1.2" fill="#f07070" opacity="0.7"/><g opacity="0.55"><path d="M486.5 77.5L491 72.5H507V82.5H491Z" fill="#fbe26a" stroke="#c8a818" stroke-width="1"/><text x="491.5" y="81.2" font-family="Liberation Sans" font-weight="bold" font-size="9.5" fill="#222" textLength="8" lengthAdjust="spacingAndGlyphs">ab</text><path d="M503 76.5l1.5 5" stroke="#fff" stroke-width="1.4"/><circle cx="504.8" cy="86" r="4.5" fill="#b01818"/></g><g opacity="0.6"><path d="M524.5 77.5L529 72.5H545V82.5H529Z" fill="#fbe26a" stroke="#c8a818" stroke-width="1"/><text x="529.5" y="81.2" font-family="Liberation Sans" font-weight="bold" font-size="9.5" fill="#222" textLength="14" lengthAdjust="spacingAndGlyphs">abc</text></g><g opacity="0.75"><path d="M532 87q7-6 14 0q-7 6-14 0z" fill="#fff" stroke="#666" stroke-width="0.9"/><circle cx="539" cy="87" r="2.6" fill="#7aa0d8"/><circle cx="539" cy="87" r="1" fill="#222"/></g><g opacity="0.6"><path d="M562.5 77.5L567 72.5H583V82.5H567Z" fill="#fbe26a" stroke="#c8a818" stroke-width="1"/><text x="567.5" y="81.2" font-family="Liberation Sans" font-weight="bold" font-size="9.5" fill="#222" textLength="14" lengthAdjust="spacingAndGlyphs">abc</text></g><g opacity="0.7"><rect x="575.5" y="81.5" width="10" height="10" rx="2" fill="#6a92c8" stroke="#4a72a8" stroke-width="1"/><path d="M577 85.2h3.5v-2.5l3.8 3.8l-3.8 3.8v-2.5h-3.5z" fill="#fff"/></g><g opacity="0.6"><path d="M600.5 77.5L605 72.5H621V82.5H605Z" fill="#fbe26a" stroke="#c8a818" stroke-width="1"/><text x="605.5" y="81.2" font-family="Liberation Sans" font-weight="bold" font-size="9.5" fill="#222" textLength="14" lengthAdjust="spacingAndGlyphs">abc</text></g><g opacity="0.7"><rect x="613.5" y="81.5" width="10" height="10" rx="2" fill="#6a8fc0" stroke="#4a6fa0" stroke-width="1"/><path d="M621.0 86.5a2.5 2.5 0 1 1 -2.5 -2.5" fill="none" stroke="#fff" stroke-width="1.3"/><path d="M618.5 82.5l2 1.5l-2 1.5z" fill="#fff"/></g><g opacity="0.6"><path d="M638.5 77.5L643 72.5H659V82.5H643Z" fill="#fbe26a" stroke="#c8a818" stroke-width="1"/><text x="643.5" y="81.2" font-family="Liberation Sans" font-weight="bold" font-size="9.5" fill="#222" textLength="14" lengthAdjust="spacingAndGlyphs">abc</text></g><g opacity="0.7"><rect x="651.5" y="81.5" width="10" height="10" rx="2" fill="#d8b840" stroke="#b89820" stroke-width="1"/><path d="M653.5 89.5L659.5 83.5" stroke="#fff" stroke-width="2"/></g><rect x="674.7" y="68.2" width="2" height="2" fill="#fcfcfc" opacity="0.9"/><rect x="675.5" y="69" width="2" height="2" fill="#b0b0b0"/><rect x="677.7" y="71.2" width="2" height="2" fill="#fcfcfc" opacity="0.9"/><rect x="678.5" y="72" width="2" height="2" fill="#b0b0b0"/><rect x="674.7" y="74.2" width="2" height="2" fill="#fcfcfc" opacity="0.9"/><rect x="675.5" y="75" width="2" height="2" fill="#b0b0b0"/><rect x="677.7" y="77.2" width="2" height="2" fill="#fcfcfc" opacity="0.9"/><rect x="678.5" y="78" width="2" height="2" fill="#b0b0b0"/><rect x="674.7" y="80.2" width="2" height="2" fill="#fcfcfc" opacity="0.9"/><rect x="675.5" y="81" width="2" height="2" fill="#b0b0b0"/><rect x="677.7" y="83.2" width="2" height="2" fill="#fcfcfc" opacity="0.9"/><rect x="678.5" y="84" width="2" height="2" fill="#b0b0b0"/><rect x="674.7" y="86.2" width="2" height="2" fill="#fcfcfc" opacity="0.9"/><rect x="675.5" y="87" width="2" height="2" fill="#b0b0b0"/><rect x="677.7" y="89.2" width="2" height="2" fill="#fcfcfc" opacity="0.9"/><rect x="678.5" y="90" width="2" height="2" fill="#b0b0b0"/><rect x="687.7" y="68.2" width="2" height="2" fill="#fcfcfc" opacity="0.9"/><rect x="688.5" y="69" width="2" height="2" fill="#b0b0b0"/><rect x="690.7" y="71.2" width="2" height="2" fill="#fcfcfc" opacity="0.9"/><rect x="691.5" y="72" width="2" height="2" fill="#b0b0b0"/><rect x="687.7" y="74.2" width="2" height="2" fill="#fcfcfc" opacity="0.9"/><rect x="688.5" y="75" width="2" height="2" fill="#b0b0b0"/><rect x="690.7" y="77.2" width="2" height="2" fill="#fcfcfc" opacity="0.9"/><rect x="691.5" y="78" width="2" height="2" fill="#b0b0b0"/><rect x="687.7" y="80.2" width="2" height="2" fill="#fcfcfc" opacity="0.9"/><rect x="688.5" y="81" width="2" height="2" fill="#b0b0b0"/><rect x="690.7" y="83.2" width="2" height="2" fill="#fcfcfc" opacity="0.9"/><rect x="691.5" y="84" width="2" height="2" fill="#b0b0b0"/><rect x="687.7" y="86.2" width="2" height="2" fill="#fcfcfc" opacity="0.9"/><rect x="688.5" y="87" width="2" height="2" fill="#b0b0b0"/><rect x="690.7" y="89.2" width="2" height="2" fill="#fcfcfc" opacity="0.9"/><rect x="691.5" y="90" width="2" height="2" fill="#b0b0b0"/><rect x="11.7" y="104.2" width="2" height="2" fill="#fcfcfc" opacity="0.9"/><rect x="12.5" y="105" width="2" height="2" fill="#b0b0b0"/><rect x="14.7" y="107.2" width="2" height="2" fill="#fcfcfc" opacity="0.9"/><rect x="15.5" y="108" width="2" height="2" fill="#b0b0b0"/><rect x="11.7" y="110.2" width="2" height="2" fill="#fcfcfc" opacity="0.9"/><rect x="12.5" y="111" width="2" height="2" fill="#b0b0b0"/><rect x="14.7" y="113.2" width="2" height="2" fill="#fcfcfc" opacity="0.9"/><rect x="15.5" y="114" width="2" height="2" fill="#b0b0b0"/><rect x="11.7" y="116.2" width="2" height="2" fill="#fcfcfc" opacity="0.9"/><rect x="12.5" y="117" width="2" height="2" fill="#b0b0b0"/><rect x="14.7" y="119.2" width="2" height="2" fill="#fcfcfc" opacity="0.9"/><rect x="15.5" y="120" width="2" height="2" fill="#b0b0b0"/><rect x="11.7" y="122.2" width="2" height="2" fill="#fcfcfc" opacity="0.9"/><rect x="12.5" y="123" width="2" height="2" fill="#b0b0b0"/><rect x="14.7" y="125.2" width="2" height="2" fill="#fcfcfc" opacity="0.9"/><rect x="15.5" y="126" width="2" height="2" fill="#b0b0b0"/><path d="M24 113l6.8-6.6v4.6h3.4a6 6 0 0 1 0 12h-1.6v-3.6h1.1a2.6 2.6 0 0 0 0-5.2h-2.9v5.4z" fill="#bcdcbc" stroke="#9bc09b" stroke-width="0.9"/><path d="M80 113l-6.8-6.6v4.6h-3.4a6 6 0 0 0 0 12h1.6v-3.6h-1.1a2.6 2.6 0 0 1 0-5.2h2.9v5.4z" fill="#bcdcbc" stroke="#9bc09b" stroke-width="0.9"/><path transform="translate(98,105) scale(1.0,0.9230769230769231)" d="M3 2C6 -0.5 10 0.5 13 2C16 3.2 19.5 0.8 21 4.5C22.3 8 20.5 12.5 17 11.5C14 10.5 11.5 10 8.5 11.2C3.5 13.2 0.2 9.5 0.8 5.5C1 4 1.8 2.8 3 2Z" fill="#bcdcbc" stroke="#8a8a8a" stroke-width="1.25"/><g opacity="0.9"><rect x="110.5" y="117.5" width="10" height="10" rx="2" fill="#6a8fc0" stroke="#4a6fa0" stroke-width="1"/><path d="M118.0 122.5a2.5 2.5 0 1 1 -2.5 -2.5" fill="none" stroke="#fff" stroke-width="1.3"/><path d="M115.5 118.5l2 1.5l-2 1.5z" fill="#fff"/></g><circle cx="143" cy="111.5" r="7.5" fill="#c4e2c4" stroke="#9c9" stroke-width="1"/><path d="M148 111l5 0 4 7-4 7h-8l-4-7 4-7z" fill="#bcd4e4" stroke="#8aa" stroke-width="1"/><path d="M141 111q8-4 10 9" stroke="#666" stroke-width="0.9" fill="none"/><path d="M149 118l2 2.5 1.5-3" stroke="#666" stroke-width="0.9" fill="none"/><path transform="translate(174.5,104.5) scale(0.9545454545454546,0.9230769230769231)" d="M3 2C6 -0.5 10 0.5 13 2C16 3.2 19.5 0.8 21 4.5C22.3 8 20.5 12.5 17 11.5C14 10.5 11.5 10 8.5 11.2C3.5 13.2 0.2 9.5 0.8 5.5C1 4 1.8 2.8 3 2Z" fill="#bcdcbc" stroke="#8a8a8a" stroke-width="1.28"/><ellipse cx="181" cy="109.5" rx="4" ry="2.6" fill="#f4f4f4" stroke="#888" stroke-width="1"/><g opacity="0.85"><rect x="186.5" y="117.5" width="10" height="10" rx="2" fill="#d8b22a" stroke="#b28f12" stroke-width="1"/><path d="M191.5 119V126M188.2 120.8L194.8 124.2M188.2 124.2L194.8 120.8" stroke="#fff" stroke-width="1.3"/><circle cx="191.5" cy="122.5" r="1.8" fill="#d8b22a" stroke="#fff" stroke-width="1"/></g><path transform="translate(212,104.5) scale(0.9545454545454546,0.9230769230769231)" d="M3 2C6 -0.5 10 0.5 13 2C16 3.2 19.5 0.8 21 4.5C22.3 8 20.5 12.5 17 11.5C14 10.5 11.5 10 8.5 11.2C3.5 13.2 0.2 9.5 0.8 5.5C1 4 1.8 2.8 3 2Z" fill="#cfcfcf" stroke="#999" stroke-width="1.28"/><path d="M214 124q1-6 6-7q3 0 2 4t-6 5q-2 0-2-2z" fill="#b0d4b0" stroke="#999" stroke-width="1"/><g opacity="0.85"><rect x="224.5" y="117.5" width="10" height="10" rx="2" fill="#d8b22a" stroke="#b28f12" stroke-width="1"/><path d="M229.5 119V126M226.2 120.8L232.8 124.2M226.2 124.2L232.8 120.8" stroke="#fff" stroke-width="1.3"/><circle cx="229.5" cy="122.5" r="1.8" fill="#d8b22a" stroke="#fff" stroke-width="1"/></g><path transform="translate(251,104.5) scale(0.9545454545454546,0.9230769230769231)" d="M3 2C6 -0.5 10 0.5 13 2C16 3.2 19.5 0.8 21 4.5C22.3 8 20.5 12.5 17 11.5C14 10.5 11.5 10 8.5 11.2C3.5 13.2 0.2 9.5 0.8 5.5C1 4 1.8 2.8 3 2Z" fill="#bcdcbc" stroke="#8a8a8a" stroke-width="1.28"/><ellipse cx="257.5" cy="109.5" rx="4" ry="2.6" fill="#f4f4f4" stroke="#888" stroke-width="1"/><g opacity="0.85"><rect x="263.5" y="118.5" width="10" height="10" rx="2" fill="#e88080" stroke="#cc5f5f" stroke-width="1"/><path d="M266 121L271 126M266 126L271 121" stroke="#fff" stroke-width="1.8"/></g><path transform="translate(288,104.5) scale(0.9545454545454546,0.9230769230769231)" d="M3 2C6 -0.5 10 0.5 13 2C16 3.2 19.5 0.8 21 4.5C22.3 8 20.5 12.5 17 11.5C14 10.5 11.5 10 8.5 11.2C3.5 13.2 0.2 9.5 0.8 5.5C1 4 1.8 2.8 3 2Z" fill="#cfcfcf" stroke="#999" stroke-width="1.28"/><path d="M288 124q1-6 6-7q3 0 2 4t-6 5q-2 0-2-2z" fill="#b0d4b0" stroke="#999" stroke-width="1"/><g opacity="0.85"><rect x="301.5" y="118.5" width="10" height="10" rx="2" fill="#e88080" stroke="#cc5f5f" stroke-width="1"/><path d="M304 121L309 126M304 126L309 121" stroke="#fff" stroke-width="1.8"/></g><path d="M327.2 114.5L337.8 114.2L333.5 120.5L330.5 122.5Z" fill="#f2e070" stroke="#999" stroke-width="0.8"/><path transform="translate(326,105) scale(1.0,0.9230769230769231)" d="M3 2C6 -0.5 10 0.5 13 2C16 3.2 19.5 0.8 21 4.5C22.3 8 20.5 12.5 17 11.5C14 10.5 11.5 10 8.5 11.2C3.5 13.2 0.2 9.5 0.8 5.5C1 4 1.8 2.8 3 2Z" fill="#bcdcbc" stroke="#8a8a8a" stroke-width="1.25"/><path d="M327.2 114.8L337.5 114.6L333.6 120.3L330.6 122.2Z" fill="#f2e070"/><path d="M364.8 112C364 106 369 104 375 105.5C380 107 385 105 386.5 110C388 115 387 121.3 382 121.3C379 121.3 377.5 117.5 375 117.5C372 117.5 369 121.3 366.5 120.3C364 119.3 365.3 116 364.8 112Z" fill="#f5e27a" stroke="#999" stroke-width="1"/><path d="M368 112C367.5 108.5 371 107.8 375 108.8C379 109.8 382.5 108.3 383.5 111.2C384.5 114 384 117.5 382 117.5C380 117.5 377.5 114.3 375 114.3C372 114.3 370 118 368.8 117.3C367.5 116.5 368.3 114.5 368 112Z" fill="#c0dcc0" stroke="#a8b8a0" stroke-width="0.8"/><path d="M401.5 111C401 106 405 103.5 409 104.5L412 105.5L411 115.5C407.5 117.5 402 116 401.5 111Z M414.5 106.5C418 105 422.5 106.5 422.5 110.5C422.5 114.5 419.5 117 415 116Z" fill="#bcdcbc" stroke="#999" stroke-width="1"/><path d="M416.8 104.3L411.5 120M413 104.8L417.5 119.5" stroke="#888" stroke-width="0.9"/><ellipse cx="410.3" cy="124.5" rx="1.7" ry="3" transform="rotate(22 410.3 124.5)" fill="none" stroke="#d05050" stroke-width="1.3"/><ellipse cx="418.5" cy="122.8" rx="1.7" ry="3" transform="rotate(-25 418.5 122.8)" fill="none" stroke="#d05050" stroke-width="1.3"/><path d="M440 111C439.5 106 444 103.5 449 105L452.3 106V117C449 119.5 440.5 118 440 111Z M452.3 106C456 104 463 104.5 463 109.5C463 114.5 459 118.5 452.3 117Z" fill="#bcdcbc" stroke="#999" stroke-width="1"/><path d="M448.5 108h7.2M448.5 110.8h7.2M448.5 113.5h7.2M452.3 105.5v12M449 117.5l3.5 2.5-3 2 3.5 2.5-2.5 2" stroke="#999" stroke-width="0.9" fill="none"/><path d="M485 104h6l-3 10h-3l-2-4z" fill="#c8c8c8" stroke="#888" stroke-width="0.8"/><rect x="480" y="121" width="18" height="6" fill="#a4bcd0" stroke="#7a94a8" stroke-width="0.8"/><path d="M488 117l2 3-2 3-2-3z" fill="#f0e6a0" stroke="#999" stroke-width="0.6"/><path d="M533 111a8 8 0 1 0-0.5 9" fill="none" stroke="#7fa4e0" stroke-width="2.6"/><path d="M529.5 112l6.5-0.5-1.5-6z" fill="#7fa4e0"/><rect x="552.7" y="104.2" width="2" height="2" fill="#fcfcfc" opacity="0.9"/><rect x="553.5" y="105" width="2" height="2" fill="#b0b0b0"/><rect x="555.7" y="107.2" width="2" height="2" fill="#fcfcfc" opacity="0.9"/><rect x="556.5" y="108" width="2" height="2" fill="#b0b0b0"/><rect x="552.7" y="110.2" width="2" height="2" fill="#fcfcfc" opacity="0.9"/><rect x="553.5" y="111" width="2" height="2" fill="#b0b0b0"/><rect x="555.7" y="113.2" width="2" height="2" fill="#fcfcfc" opacity="0.9"/><rect x="556.5" y="114" width="2" height="2" fill="#b0b0b0"/><rect x="552.7" y="116.2" width="2" height="2" fill="#fcfcfc" opacity="0.9"/><rect x="553.5" y="117" width="2" height="2" fill="#b0b0b0"/><rect x="555.7" y="119.2" width="2" height="2" fill="#fcfcfc" opacity="0.9"/><rect x="556.5" y="120" width="2" height="2" fill="#b0b0b0"/><rect x="552.7" y="122.2" width="2" height="2" fill="#fcfcfc" opacity="0.9"/><rect x="553.5" y="123" width="2" height="2" fill="#b0b0b0"/><rect x="555.7" y="125.2" width="2" height="2" fill="#fcfcfc" opacity="0.9"/><rect x="556.5" y="126" width="2" height="2" fill="#b0b0b0"/><rect x="573" y="107" width="12.5" height="18" fill="#f0f0f0" stroke="#9a9a9a" stroke-width="1"/><rect x="562.5" y="104.5" width="4.5" height="21.5" rx="2.2" fill="#f2f2f2" stroke="#9a9a9a" stroke-width="1"/><rect x="568.5" y="104.5" width="4.5" height="21.5" rx="2.2" fill="#f2f2f2" stroke="#9a9a9a" stroke-width="1"/><path d="M562.8 124.5q0.5 2.5 3 2.5h19.7" fill="none" stroke="#9a9a9a" stroke-width="1"/><path d="M576.0 117L576.6 108.0" stroke="#4a9a4a" stroke-width="1.1" fill="none"/><path d="M577.8 117L578.4 109.5" stroke="#4a9a4a" stroke-width="1.1" fill="none"/><path d="M579.6 117L580.2 108.0" stroke="#4a9a4a" stroke-width="1.1" fill="none"/><path d="M581.4 117L582.0 109.5" stroke="#4a9a4a" stroke-width="1.1" fill="none"/><path d="M583.2 117L583.8000000000001 108.0" stroke="#4a9a4a" stroke-width="1.1" fill="none"/><rect x="575.5" y="117.5" width="10" height="10" rx="2" fill="#2f4f6f" stroke="#1f3f5f" stroke-width="1"/><path d="M580.5 119.5l-2.5 2.5h1.6v3h1.8v-3h1.6z M577.5 124v2h6v-2" fill="#fff" stroke="#fff" stroke-width="0.6"/><rect x="611" y="107" width="12.5" height="18" fill="#f0f0f0" stroke="#9a9a9a" stroke-width="1"/><rect x="600.5" y="104.5" width="4.5" height="21.5" rx="2.2" fill="#f2f2f2" stroke="#9a9a9a" stroke-width="1"/><rect x="606.5" y="104.5" width="4.5" height="21.5" rx="2.2" fill="#f2f2f2" stroke="#9a9a9a" stroke-width="1"/><path d="M600.8 124.5q0.5 2.5 3 2.5h19.7" fill="none" stroke="#9a9a9a" stroke-width="1"/><path d="M614.0 117L614.6 108.0" stroke="#4a9a4a" stroke-width="1.1" fill="none"/><path d="M615.8 117L616.4 109.5" stroke="#4a9a4a" stroke-width="1.1" fill="none"/><path d="M617.6 117L618.2 108.0" stroke="#4a9a4a" stroke-width="1.1" fill="none"/><path d="M619.4 117L620.0 109.5" stroke="#4a9a4a" stroke-width="1.1" fill="none"/><path d="M621.2 117L621.8000000000001 108.0" stroke="#4a9a4a" stroke-width="1.1" fill="none"/><rect x="613.5" y="117.5" width="10" height="10" rx="2" fill="#d8b22a" stroke="#b28f12" stroke-width="1"/><path d="M618.5 119V126M615.2 120.8L621.8 124.2M615.2 124.2L621.8 120.8" stroke="#fff" stroke-width="1.3"/><circle cx="618.5" cy="122.5" r="1.8" fill="#d8b22a" stroke="#fff" stroke-width="1"/><g opacity="0.5"><rect x="649" y="107" width="12.5" height="18" fill="#f0f0f0" stroke="#9a9a9a" stroke-width="1"/><rect x="638.5" y="104.5" width="4.5" height="21.5" rx="2.2" fill="#f2f2f2" stroke="#9a9a9a" stroke-width="1"/><rect x="644.5" y="104.5" width="4.5" height="21.5" rx="2.2" fill="#f2f2f2" stroke="#9a9a9a" stroke-width="1"/><path d="M638.8 124.5q0.5 2.5 3 2.5h19.7" fill="none" stroke="#9a9a9a" stroke-width="1"/><path d="M652.0 117L652.6 108.0" stroke="#4a9a4a" stroke-width="1.1" fill="none"/><path d="M653.8 117L654.4 109.5" stroke="#4a9a4a" stroke-width="1.1" fill="none"/><path d="M655.6 117L656.2 108.0" stroke="#4a9a4a" stroke-width="1.1" fill="none"/><path d="M657.4 117L658.0 109.5" stroke="#4a9a4a" stroke-width="1.1" fill="none"/><path d="M659.2 117L659.8000000000001 108.0" stroke="#4a9a4a" stroke-width="1.1" fill="none"/></g><g opacity="0.8"><rect x="651.5" y="118.5" width="10" height="10" rx="2" fill="#eaa2a2" stroke="#d88c8c" stroke-width="1"/><path d="M653.5 123.5H659.5" stroke="#fff" stroke-width="2.2"/></g><path d="M673.5 100V131" stroke="#555" stroke-width="1" stroke-dasharray="1 2.5"/><path d="M686 113v14h14" stroke="#888" stroke-width="1" fill="none"/><path d="M688 109v15h16" stroke="#bbb" stroke-width="1" fill="none"/><path d="M690 104.5L697 117L702.5 106L708 106" stroke="#3a5a7a" stroke-width="1.1" fill="none"/><circle cx="690" cy="104.5" r="1.4" fill="#eef" stroke="#3a5a7a"/><circle cx="697" cy="117" r="1.4" fill="#eef" stroke="#3a5a7a"/><circle cx="702.5" cy="106" r="1.4" fill="#eef" stroke="#3a5a7a"/><circle cx="708" cy="106" r="1.4" fill="#eef" stroke="#3a5a7a"/><path d="M700.5 119L701.1 109.0" stroke="#4a9a4a" stroke-width="1.1" fill="none"/><path d="M702.3 119L702.9 110.5" stroke="#4a9a4a" stroke-width="1.1" fill="none"/><path d="M704.1 119L704.7 109.0" stroke="#4a9a4a" stroke-width="1.1" fill="none"/><path d="M705.9 119L706.5 110.5" stroke="#4a9a4a" stroke-width="1.1" fill="none"/><path d="M707.7 119L708.3000000000001 109.0" stroke="#4a9a4a" stroke-width="1.1" fill="none"/><rect x="699.5" y="117.5" width="10" height="10" rx="2" fill="#5a9e5a" stroke="#3f7f3f" stroke-width="1"/><path d="M704.5 119.2V125.8M701.2 122.5H707.8" stroke="#fff" stroke-width="1.9"/><path d="M724 113v14h14" stroke="#999" stroke-width="1" fill="none"/><path d="M726.5 109v15h16" stroke="#aaa" stroke-width="1" fill="none"/><rect x="732" y="105" width="12" height="12" fill="#7aa0c8"/><path d="M732 105h4v4h-4zM740 105h4v4h-4zM736 109h4v4h-4zM732 113h4v4h-4zM740 113h4v4h-4z" fill="#1f3f5f"/><path d="M738.5 119L739.1 109.0" stroke="#4a9a4a" stroke-width="1.1" fill="none"/><path d="M740.3 119L740.9 110.5" stroke="#4a9a4a" stroke-width="1.1" fill="none"/><path d="M742.1 119L742.7 109.0" stroke="#4a9a4a" stroke-width="1.1" fill="none"/><path d="M743.9 119L744.5 110.5" stroke="#4a9a4a" stroke-width="1.1" fill="none"/><path d="M745.7 119L746.3000000000001 109.0" stroke="#4a9a4a" stroke-width="1.1" fill="none"/><rect x="738.0" y="117.5" width="10" height="10" rx="2" fill="#5a9e5a" stroke="#3f7f3f" stroke-width="1"/><path d="M743.0 119.2V125.8M739.7 122.5H746.3" stroke="#fff" stroke-width="1.9"/><g opacity="0.6"><path d="M762 113v14h14" stroke="#999" stroke-width="1" fill="none"/><path d="M764.5 109v15h16" stroke="#aaa" stroke-width="1" fill="none"/><path d="M766 104.5L773 117L778.5 106L784 106" stroke="#3a5a7a" stroke-width="1.1" fill="none"/><path d="M776.5 119L777.1 109.0" stroke="#4a9a4a" stroke-width="1.1" fill="none"/><path d="M778.3 119L778.9 110.5" stroke="#4a9a4a" stroke-width="1.1" fill="none"/><path d="M780.1 119L780.7 109.0" stroke="#4a9a4a" stroke-width="1.1" fill="none"/><path d="M781.9 119L782.5 110.5" stroke="#4a9a4a" stroke-width="1.1" fill="none"/><path d="M783.7 119L784.3000000000001 109.0" stroke="#4a9a4a" stroke-width="1.1" fill="none"/></g><g opacity="0.85"><rect x="775.5" y="117.5" width="10" height="10" rx="2" fill="#d8b22a" stroke="#b28f12" stroke-width="1"/><path d="M780.5 119V126M777.2 120.8L783.8 124.2M777.2 124.2L783.8 120.8" stroke="#fff" stroke-width="1.3"/><circle cx="780.5" cy="122.5" r="1.8" fill="#d8b22a" stroke="#fff" stroke-width="1"/></g><g opacity="0.6"><path d="M800 113v14h14" stroke="#999" stroke-width="1" fill="none"/><path d="M802.5 109v15h16" stroke="#aaa" stroke-width="1" fill="none"/><path d="M804 104.5L811 117L816.5 106L822 106" stroke="#3a5a7a" stroke-width="1.1" fill="none"/><path d="M814.5 119L815.1 109.0" stroke="#4a9a4a" stroke-width="1.1" fill="none"/><path d="M816.3 119L816.9 110.5" stroke="#4a9a4a" stroke-width="1.1" fill="none"/><path d="M818.1 119L818.7 109.0" stroke="#4a9a4a" stroke-width="1.1" fill="none"/><path d="M819.9 119L820.5 110.5" stroke="#4a9a4a" stroke-width="1.1" fill="none"/><path d="M821.7 119L822.3000000000001 109.0" stroke="#4a9a4a" stroke-width="1.1" fill="none"/></g><g opacity="0.85"><rect x="813.5" y="117.5" width="10" height="10" rx="2" fill="#d8b840" stroke="#b89820" stroke-width="1"/><path d="M815.5 125.5L821.5 119.5" stroke="#fff" stroke-width="2"/></g><g opacity="0.75"><path d="M843 109l6-4 4 3-5 5z" fill="#ddd" stroke="#888" stroke-width="0.9"/><path d="M849 112l5 7" stroke="#c89050" stroke-width="2.6"/><path d="M852 115l-7 10" stroke="#e0dc70" stroke-width="2"/><path d="M851.5 127L852.1 107.0" stroke="#6aa06a" stroke-width="1.1" fill="none"/><path d="M853.3 127L853.9 108.5" stroke="#6aa06a" stroke-width="1.1" fill="none"/><path d="M855.1 127L855.7 107.0" stroke="#6aa06a" stroke-width="1.1" fill="none"/><path d="M856.9 127L857.5 108.5" stroke="#6aa06a" stroke-width="1.1" fill="none"/><path d="M858.7 127L859.3000000000001 107.0" stroke="#6aa06a" stroke-width="1.1" fill="none"/></g><g opacity="0.7"><path d="M876.5 107a2 2 0 0 1 4 0v17a2 2 0 0 1-4 0z" fill="#f4f4f4" stroke="#aaa" stroke-width="1"/><path d="M880.5 108h16v17h-18" fill="#f4f4f4" stroke="#aaa"/><rect x="883" y="111" width="9" height="11" fill="#cfe4f4" stroke="#334" stroke-width="0.8" stroke-dasharray="1.4 1.2"/><path d="M889.5 124L890.1 110.0" stroke="#5a9a5a" stroke-width="1.1" fill="none"/><path d="M891.3 124L891.9 111.5" stroke="#5a9a5a" stroke-width="1.1" fill="none"/><path d="M893.1 124L893.7 110.0" stroke="#5a9a5a" stroke-width="1.1" fill="none"/><path d="M894.9 124L895.5 111.5" stroke="#5a9a5a" stroke-width="1.1" fill="none"/><path d="M896.7 124L897.3000000000001 110.0" stroke="#5a9a5a" stroke-width="1.1" fill="none"/></g><g opacity="0.7"><path d="M914.5 107a2 2 0 0 1 4 0v17a2 2 0 0 1-4 0z" fill="#f4f4f4" stroke="#aaa" stroke-width="1"/><path d="M918.5 108h16v17h-18" fill="#f4f4f4" stroke="#aaa"/><rect x="921" y="111" width="9" height="11" fill="#cfe4f4" stroke="#334" stroke-width="0.8" stroke-dasharray="1.4 1.2"/><path d="M927.5 124L928.1 110.0" stroke="#5a9a5a" stroke-width="1.1" fill="none"/><path d="M929.3 124L929.9 111.5" stroke="#5a9a5a" stroke-width="1.1" fill="none"/><path d="M931.1 124L931.7 110.0" stroke="#5a9a5a" stroke-width="1.1" fill="none"/><path d="M932.9 124L933.5 111.5" stroke="#5a9a5a" stroke-width="1.1" fill="none"/><path d="M934.7 124L935.3000000000001 110.0" stroke="#5a9a5a" stroke-width="1.1" fill="none"/></g><g opacity="0.85"><rect x="927.5" y="117.5" width="10" height="10" rx="2" fill="#d8b840" stroke="#b89820" stroke-width="1"/><path d="M929.5 125.5L935.5 119.5" stroke="#fff" stroke-width="2"/></g><rect x="11.2" y="139.2" width="2" height="2" fill="#fcfcfc" opacity="0.9"/><rect x="12" y="140" width="2" height="2" fill="#a4a4a4"/><rect x="14.2" y="142.2" width="2" height="2" fill="#fcfcfc" opacity="0.9"/><rect x="15" y="143" width="2" height="2" fill="#a4a4a4"/><rect x="17.2" y="139.2" width="2" height="2" fill="#fcfcfc" opacity="0.9"/><rect x="18" y="140" width="2" height="2" fill="#a4a4a4"/><rect x="20.2" y="142.2" width="2" height="2" fill="#fcfcfc" opacity="0.9"/><rect x="21" y="143" width="2" height="2" fill="#a4a4a4"/><rect x="23.2" y="139.2" width="2" height="2" fill="#fcfcfc" opacity="0.9"/><rect x="24" y="140" width="2" height="2" fill="#a4a4a4"/><rect x="26.2" y="142.2" width="2" height="2" fill="#fcfcfc" opacity="0.9"/><rect x="27" y="143" width="2" height="2" fill="#a4a4a4"/><rect x="29.2" y="139.2" width="2" height="2" fill="#fcfcfc" opacity="0.9"/><rect x="30" y="140" width="2" height="2" fill="#a4a4a4"/><rect x="32.2" y="142.2" width="2" height="2" fill="#fcfcfc" opacity="0.9"/><rect x="33" y="143" width="2" height="2" fill="#a4a4a4"/><rect x="35.2" y="139.2" width="2" height="2" fill="#fcfcfc" opacity="0.9"/><rect x="36" y="140" width="2" height="2" fill="#a4a4a4"/><rect x="38.2" y="142.2" width="2" height="2" fill="#fcfcfc" opacity="0.9"/><rect x="39" y="143" width="2" height="2" fill="#a4a4a4"/><rect x="41.2" y="139.2" width="2" height="2" fill="#fcfcfc" opacity="0.9"/><rect x="42" y="140" width="2" height="2" fill="#a4a4a4"/><path d="M18 154L24.5 173L31.5 154L38 154" stroke="#3a5a7a" stroke-width="1.5" fill="none"/><circle cx="18" cy="154" r="2.1" fill="#f2f4f8" stroke="#3a5a7a" stroke-width="1.2"/><circle cx="24.5" cy="173" r="2.1" fill="#f2f4f8" stroke="#3a5a7a" stroke-width="1.2"/><circle cx="31.5" cy="154" r="2.1" fill="#f2f4f8" stroke="#3a5a7a" stroke-width="1.2"/><circle cx="38" cy="154" r="2.1" fill="#f2f4f8" stroke="#3a5a7a" stroke-width="1.2"/><rect x="30.8" y="165.3" width="9" height="9" rx="2" fill="#5a9e5a" stroke="#3f7f3f" stroke-width="1"/><path d="M35.3 167.0V172.60000000000002M32.5 169.8H38.099999999999994" stroke="#fff" stroke-width="1.9"/><rect x="16" y="189" width="19" height="20" fill="#6f9cd0"/><path d="M16 189h6.3v6.7h-6.3zM28.7 189h6.3v6.7h-6.3zM22.3 195.7h6.4v6.6h-6.4zM16 202.3h6.3v6.7h-6.3z" fill="#1f3f62"/><rect x="31.5" y="204.3" width="9" height="9" rx="2" fill="#5a9e5a" stroke="#3f7f3f" stroke-width="1"/><path d="M36.0 206.0V211.60000000000002M33.2 208.8H38.8" stroke="#fff" stroke-width="1.9"/><path d="M17 233c0-5 5-7 10-6s9 2 9 6-2 5-4 5l-1 6c0 2-4 2-4 0v-4c-2 0-3 0-3 1v3c-1 1-3 1-3 0v-3c-3-1-4-5-4-8z" fill="#5e8ed0" stroke="#2a4a70" stroke-width="1.1"/><path d="M30 231q2 3 0 6" stroke="#2a4a70" stroke-width="1" fill="none"/><rect x="31.5" y="242.0" width="9" height="9" rx="2" fill="#5a9e5a" stroke="#3f7f3f" stroke-width="1"/><path d="M36.0 243.7V249.3M33.2 246.5H38.8" stroke="#fff" stroke-width="1.9"/><path d="M17 289c2-10 7-19 18-24-2 7-6 14-12 18-2 1-4 3-6 6z" fill="#8ab0e0" stroke="#2a4a70" stroke-width="1"/><path d="M18 287c4-7 9-13 16-20" stroke="#2a4a70" stroke-width="0.8" fill="none"/><rect x="31.5" y="280.5" width="9" height="9" rx="2" fill="#5a9e5a" stroke="#3f7f3f" stroke-width="1"/><path d="M36.0 282.2V287.8M33.2 285.0H38.8" stroke="#fff" stroke-width="1.9"/><path d="M16 303c8 0 16 4 20 12-5-1-12 2-20 12 4-8 4-17 0-24z" fill="#6a96d0" stroke="#1f3f62" stroke-width="1.2"/><path d="M21 304q3 10-1 20M26 306q3 8-1 16M31 309q2 6-1 12" stroke="#1f3f62" stroke-width="0.9" fill="none"/><rect x="31.5" y="318.5" width="9" height="9" rx="2" fill="#5a9e5a" stroke="#3f7f3f" stroke-width="1"/><path d="M36.0 320.2V325.8M33.2 323.0H38.8" stroke="#fff" stroke-width="1.9"/><ellipse cx="28" cy="351.3" rx="11.3" ry="10.2" fill="#b8d2ee" stroke="#4f86c8" stroke-width="1"/><path d="M17.5 347h21M17.5 355.5h21M28 341v20.5" stroke="#e6f0fa" stroke-width="0.8" fill="none"/><ellipse cx="28" cy="351.3" rx="5" ry="10.2" fill="none" stroke="#e6f0fa" stroke-width="0.8"/><path d="M21 345.5l4-1 1.5 2.5-1.5 3 0.5 3-2 1-1-3-2-1.5z M27.5 344.5l5.5 0.5 1 3-2 2.5 0.5 3.5-2 2-1.5-3-2-2 1-3z" fill="#2a4f7a" opacity="0.85"/><rect x="31.3" y="356.5" width="9" height="9" rx="2" fill="#5a9e5a" stroke="#3f7f3f" stroke-width="1"/><path d="M35.8 358.2V363.8M33.0 361.0H38.599999999999994" stroke="#fff" stroke-width="1.9"/><ellipse cx="28" cy="389.5" rx="11.3" ry="10.4" fill="#2a4e80" stroke="#1a2f50" stroke-width="1"/><path d="M24 380.5q4-2 8 0l-1.5 4h-5z M24 398.5q4 2 8 0l-1.5-4h-5z" fill="#8cb4e4"/><path d="M17 385.5h22M17 393.5h22" stroke="#f0f4f8" stroke-width="1.3" fill="none"/><ellipse cx="28" cy="389.5" rx="5" ry="10.4" fill="none" stroke="#f0f4f8" stroke-width="1.1"/><path d="M23.5 386.5h9v6h-9z" fill="#5f8fcc"/><rect x="31.3" y="394.5" width="9" height="9" rx="2" fill="#5a9e5a" stroke="#3f7f3f" stroke-width="1"/><path d="M35.8 396.2V401.8M33.0 399.0H38.599999999999994" stroke="#fff" stroke-width="1.9"/><ellipse cx="28" cy="427.3" rx="11.3" ry="10.2" fill="#e8f0f8" stroke="#5b8fd8" stroke-width="1"/><path d="M17.5 423h21M17.5 431.5h21M28 417v20.5" stroke="#7aa6e0" stroke-width="0.7" fill="none"/><ellipse cx="28" cy="427.3" rx="5" ry="10.2" fill="none" stroke="#7aa6e0" stroke-width="0.7"/><path d="M21.5 422.5L26 434L30.5 422.5L34.5 422.5" stroke="#1a2a3a" stroke-width="1.2" fill="none"/><circle cx="21.5" cy="422.5" r="1.5" fill="#fff" stroke="#1a2a3a" stroke-width="0.9"/><circle cx="26" cy="434" r="1.5" fill="#fff" stroke="#1a2a3a" stroke-width="0.9"/><circle cx="30.5" cy="422.5" r="1.5" fill="#fff" stroke="#1a2a3a" stroke-width="0.9"/><circle cx="34.5" cy="422.5" r="1.5" fill="#fff" stroke="#1a2a3a" stroke-width="0.9"/><rect x="31.3" y="432.5" width="9" height="9" rx="2" fill="#5a9e5a" stroke="#3f7f3f" stroke-width="1"/><path d="M35.8 434.2V439.8M33.0 437.0H38.599999999999994" stroke="#fff" stroke-width="1.9"/><path d="M24.5 457.5c3-0.5 6 1 6 4.5 0 4-4 9-8.5 12l-0.8-1c3-3 4-5 3.5-6.5-3-0.5-5-2-5-4.5s2-4 4.8-4.5z" fill="#4f7fb8" stroke="#2f5f98" stroke-width="0.6"/><rect x="31.3" y="471.0" width="9" height="9" rx="2" fill="#5a9e5a" stroke="#3f7f3f" stroke-width="1"/><path d="M35.8 472.7V478.3M33.0 475.5H38.599999999999994" stroke="#fff" stroke-width="1.9"/><path d="M18 495L24.5 511L30.5 495L37 495" stroke="#3a5a7a" stroke-width="1.3" fill="none"/><circle cx="18" cy="495" r="1.9" fill="#f2f4f8" stroke="#3a5a7a" stroke-width="1.1"/><circle cx="24.5" cy="511" r="1.9" fill="#f2f4f8" stroke="#3a5a7a" stroke-width="1.1"/><circle cx="30.5" cy="495" r="1.9" fill="#f2f4f8" stroke="#3a5a7a" stroke-width="1.1"/><circle cx="37" cy="495" r="1.9" fill="#f2f4f8" stroke="#3a5a7a" stroke-width="1.1"/><rect x="31.3" y="508.5" width="9" height="9" rx="2" fill="#d8b22a" stroke="#b28f12" stroke-width="1"/><path d="M35.8 510V516M33.0 511.8L38.599999999999994 514.2M33.0 514.2L38.599999999999994 511.8" stroke="#fff" stroke-width="1.3"/><circle cx="35.8" cy="513.0" r="1.8" fill="#d8b22a" stroke="#fff" stroke-width="1"/><path d="M42 508 h8 l-4 6 z" fill="#555"/><rect x="17" y="533" width="19.5" height="19.5" fill="#ececec" stroke="#999" stroke-width="1"/><rect x="31.3" y="546.5" width="9" height="9" rx="2" fill="#eaa2a2" stroke="#d88c8c" stroke-width="1"/><path d="M33.3 551.0H38.3" stroke="#fff" stroke-width="2.2"/><rect x="11.2" y="567.2" width="2" height="2" fill="#fcfcfc" opacity="0.9"/><rect x="12" y="568" width="2" height="2" fill="#a4a4a4"/><rect x="14.2" y="570.2" width="2" height="2" fill="#fcfcfc" opacity="0.9"/><rect x="15" y="571" width="2" height="2" fill="#a4a4a4"/><rect x="17.2" y="567.2" width="2" height="2" fill="#fcfcfc" opacity="0.9"/><rect x="18" y="568" width="2" height="2" fill="#a4a4a4"/><rect x="20.2" y="570.2" width="2" height="2" fill="#fcfcfc" opacity="0.9"/><rect x="21" y="571" width="2" height="2" fill="#a4a4a4"/><rect x="23.2" y="567.2" width="2" height="2" fill="#fcfcfc" opacity="0.9"/><rect x="24" y="568" width="2" height="2" fill="#a4a4a4"/><rect x="26.2" y="570.2" width="2" height="2" fill="#fcfcfc" opacity="0.9"/><rect x="27" y="571" width="2" height="2" fill="#a4a4a4"/><rect x="29.2" y="567.2" width="2" height="2" fill="#fcfcfc" opacity="0.9"/><rect x="30" y="568" width="2" height="2" fill="#a4a4a4"/><rect x="32.2" y="570.2" width="2" height="2" fill="#fcfcfc" opacity="0.9"/><rect x="33" y="571" width="2" height="2" fill="#a4a4a4"/><rect x="35.2" y="567.2" width="2" height="2" fill="#fcfcfc" opacity="0.9"/><rect x="36" y="568" width="2" height="2" fill="#a4a4a4"/><rect x="38.2" y="570.2" width="2" height="2" fill="#fcfcfc" opacity="0.9"/><rect x="39" y="571" width="2" height="2" fill="#a4a4a4"/><rect x="41.2" y="567.2" width="2" height="2" fill="#fcfcfc" opacity="0.9"/><rect x="42" y="568" width="2" height="2" fill="#a4a4a4"/><path d="M59 168.0h9l-4.5 7z" fill="#7a7a7a"/><rect x="80.5" y="164.5" width="13" height="13" rx="2" fill="url(#cb)" stroke="#5e6670" stroke-width="1"/><path d="M82.5 170.0l3 4.2 8-11" stroke="#1a2430" stroke-width="2.3" fill="none" stroke-linejoin="round"/><path d="M119.3 164.0l1.2 1.2-1.2 1.2-1.2-1.2z M112.5 167.3l1.2 1.2-1.2 1.2-1.2-1.2z M110.6 174.4l1.2 1.2-1.2 1.2-1.2-1.2z" fill="#fff" stroke="#777" stroke-width="0.7"/><path d="M59 206.0h9l-4.5 7z" fill="#7a7a7a"/><rect x="80.5" y="202.5" width="13" height="13" rx="2" fill="url(#cb)" stroke="#5e6670" stroke-width="1"/><path d="M82.5 208.0l3 4.2 8-11" stroke="#1a2430" stroke-width="2.3" fill="none" stroke-linejoin="round"/><path d="M119.3 202.0l1.2 1.2-1.2 1.2-1.2-1.2z M112.5 205.3l1.2 1.2-1.2 1.2-1.2-1.2z M110.6 212.4l1.2 1.2-1.2 1.2-1.2-1.2z" fill="#fff" stroke="#777" stroke-width="0.7"/><path d="M59 244.0h9l-4.5 7z" fill="#7a7a7a"/><rect x="80.5" y="240.5" width="13" height="13" rx="2" fill="url(#cb)" stroke="#5e6670" stroke-width="1"/><path d="M82.5 246.0l3 4.2 8-11" stroke="#1a2430" stroke-width="2.3" fill="none" stroke-linejoin="round"/><path d="M109.5 241.5C112 239.5 115 241.0 117 241.5C119 242.0 122 240.0 122.5 244.5C123 248.5 121 249.5 118.5 248.0C116 247.0 113 247.5 111 249.5C108 251.0 106.5 244.5 109.5 241.5Z" fill="#ececec" stroke="#999" stroke-width="1"/><path d="M59 282.0h9l-4.5 7z" fill="#7a7a7a"/><rect x="80.5" y="278.5" width="13" height="13" rx="2" fill="url(#cb)" stroke="#5e6670" stroke-width="1"/><path d="M82.5 284.0l3 4.2 8-11" stroke="#1a2430" stroke-width="2.3" fill="none" stroke-linejoin="round"/><path d="M109.5 279.5C112 277.5 115 279.0 117 279.5C119 280.0 122 278.0 122.5 282.5C123 286.5 121 287.5 118.5 286.0C116 285.0 113 285.5 111 287.5C108 289.0 106.5 282.5 109.5 279.5Z" fill="#ececec" stroke="#999" stroke-width="1"/><path d="M59 320.0h9l-4.5 7z" fill="#7a7a7a"/><rect x="80.5" y="316.5" width="13" height="13" rx="2" fill="url(#cb)" stroke="#5e6670" stroke-width="1"/><path d="M82.5 322.0l3 4.2 8-11" stroke="#1a2430" stroke-width="2.3" fill="none" stroke-linejoin="round"/><path d="M109.5 317.5C112 315.5 115 317.0 117 317.5C119 318.0 122 316.0 122.5 320.5C123 324.5 121 325.5 118.5 324.0C116 323.0 113 323.5 111 325.5C108 327.0 106.5 320.5 109.5 317.5Z" fill="#ececec" stroke="#999" stroke-width="1"/><path d="M59 358.0h9l-4.5 7z" fill="#7a7a7a"/><rect x="80.5" y="354.5" width="13" height="13" rx="2" fill="url(#cb)" stroke="#5e6670" stroke-width="1"/><path d="M82.5 360.0l3 4.2 8-11" stroke="#1a2430" stroke-width="2.3" fill="none" stroke-linejoin="round"/><path d="M109.5 355.5C112 353.5 115 355.0 117 355.5C119 356.0 122 354.0 122.5 358.5C123 362.5 121 363.5 118.5 362.0C116 361.0 113 361.5 111 363.5C108 365.0 106.5 358.5 109.5 355.5Z" fill="#ececec" stroke="#999" stroke-width="1"/><path d="M59 396.0h9l-4.5 7z" fill="#7a7a7a"/><rect x="80.5" y="392.5" width="13" height="13" rx="2" fill="url(#cb)" stroke="#5e6670" stroke-width="1"/><path d="M82.5 398.0l3 4.2 8-11" stroke="#1a2430" stroke-width="2.3" fill="none" stroke-linejoin="round"/><path d="M108.5 394.0l4 9 4-9 4 0" stroke="#999" stroke-width="0.9" fill="none"/><circle cx="106" cy="189.8" r="2.9" fill="#5ebfae" stroke="#222" stroke-width="1"/><circle cx="106" cy="228" r="5.8" fill="#c3201f" stroke="#222" stroke-width="1"/><rect x="98.5" y="258.6" width="14.5" height="14.5" fill="#cccccc" stroke="#aaaaaa" stroke-width="1"/><rect x="98.5" y="296.7" width="14.5" height="14.5" fill="#a77bbd" stroke="#6f5a80" stroke-width="1"/><rect x="98.5" y="334.4" width="14.5" height="14.5" fill="#f0203c" stroke="#a01a2a" stroke-width="1"/><rect x="98.5" y="372.5" width="14.5" height="14.5" fill="#f4b0d0" stroke="#a08090" stroke-width="1"/><path d="M98 418.5h15" stroke="#a040e8" stroke-width="1.2"/><circle cx="62" cy="146" r="7" fill="#474747"/><path d="M59 143l6 6M65 143l-6 6" stroke="#fff" stroke-width="2"/><circle cx="82" cy="146" r="7" fill="#474747"/><rect x="78.5" y="145" width="5.5" height="4" fill="none" stroke="#fff" stroke-width="1.1"/><path d="M80.5 145v-2h5v4h-1.5" fill="none" stroke="#fff" stroke-width="1.1"/><rect x="1121.5" y="1152.5" width="19" height="19" fill="#e8e8e8" stroke="#888" stroke-width="1"/><path d="M1126 1158c2-3 6-3 8 0M1128 1162c0-3 5-3 5 0s-4 5-5 3M1127 1157l3 4" stroke="#222" stroke-width="1.4" fill="none"/><circle cx="1132.5" cy="1165.5" r="2.5" fill="none" stroke="#222" stroke-width="1.3"/><rect x="1227.5" y="1152.5" width="299" height="19" fill="#fff" stroke="#9a9a9a" stroke-width="1"/><rect x="1582.5" y="1155.5" width="93" height="16" rx="2" fill="#fff" stroke="#9a9a9a" stroke-width="1"/><path d="M1661.5 1156v15" stroke="#ccc"/><path d="M1665 1162.5h5l-2.5 3z" fill="#444"/><rect x="1682.5" y="1152.5" width="19" height="19" fill="#e8e8e8" stroke="#999" stroke-width="1"/><path d="M1686 1168c3-2 8-7 12-12" stroke="#556" stroke-width="2.4"/><circle cx="1689.5" cy="1158.5" r="3.3" fill="none" stroke="#e02020" stroke-width="1.2"/><path d="M1687.2 1160.8l4.6-4.6" stroke="#e02020" stroke-width="1.2"/><rect x="1708.5" y="1154" width="14" height="14.5" rx="2.5" fill="url(#cb)" stroke="#5e6670" stroke-width="1"/><path d="M1711 1161l3 4.5 8-12" stroke="#1a2430" stroke-width="2.3" fill="none" stroke-linejoin="round"/><rect x="1852.5" y="1152.5" width="19" height="19" fill="#e6e6e6" stroke="#999" stroke-width="1"/><circle cx="1862" cy="1162" r="6.3" fill="#d0d0d0" stroke="#777" stroke-width="1.1"/><path d="M1855.5 1162h13M1862 1155.5v13" stroke="#777" stroke-width="0.9"/><circle cx="1862" cy="1162" r="3" fill="none" stroke="#888" stroke-width="0.9"/><rect x="1878.5" y="1152.5" width="19" height="19" fill="#e6e6e6" stroke="#999" stroke-width="1"/><path d="M1888 1156l6 11h-12z" fill="#f6ef90" stroke="#555" stroke-width="0.9" stroke-linejoin="round"/><path d="M1888 1159.5v4.3M1888 1165v1" stroke="#222" stroke-width="1.1"/><path d="M1913 1177l10-10M1917 1177l6-6M1921 1177l2-2" stroke="#999" stroke-width="0.9"/></svg>
<div class="wbtn" style="left:12px"></div>
<div class="wbtn" style="left:32px"></div>
<div class="wbtn" style="left:52px"></div>
<div class="lname" style="top:162.5px;">building</div>
<div class="lname" style="top:200.5px;text-decoration:underline;">vw_select_location</div>
<div class="lname" style="top:238.5px;">vw_hokkaido_buffer</div>
<div class="lname" style="top:276.5px;">vw_hokkaido_buffer_select</div>
<div class="lname" style="top:314.5px;">vw_regions_adjoining_hokkaido</div>
<div class="lname" style="top:352.5px;">region</div>
<div class="lname" style="top:390.5px;">road</div>
<div class="a" style="left:53px;top:1127px;width:292px;height:8px;background:linear-gradient(#dcdcdc,#e6e6e6);border-radius:0 0 5px 5px;border-bottom:1px solid #d0d0d0"></div>
<div class="a tab" style="left:134px;top:1125.5px;width:61px;background:linear-gradient(#9a9a9a,#7a7a7a);color:#fff;border:1px solid #6a6a6a;border-radius:5px 0 0 5px">Layers</div>
<div class="a tab" style="left:194px;top:1125.5px;width:70px;background:linear-gradient(#fdfdfd,#ececec);color:#111;border:1px solid #9a9a9a;border-left:none;border-radius:0 5px 5px 0">Browser</div>
<div class="a st" style="left:10px;top:1153px">1619011.83,6936223.12 : 1626836.32,6941240.73</div>
<div class="a st" style="left:1150px;top:1153px">Coordinate:</div>
<div class="a st" style="left:1227px;top:1154px;width:300px;text-align:center">1620169,6940257</div>
<div class="a st" style="left:1536px;top:1152px">Scale</div>
<div class="a st" style="left:1584px;top:1155px">1:33565585</div>
<div class="a st" style="left:1727px;top:1152px">Render</div>
<div class="a st" style="left:1774px;top:1152px;color:#333">EPSG:4326</div>
</body></html>
